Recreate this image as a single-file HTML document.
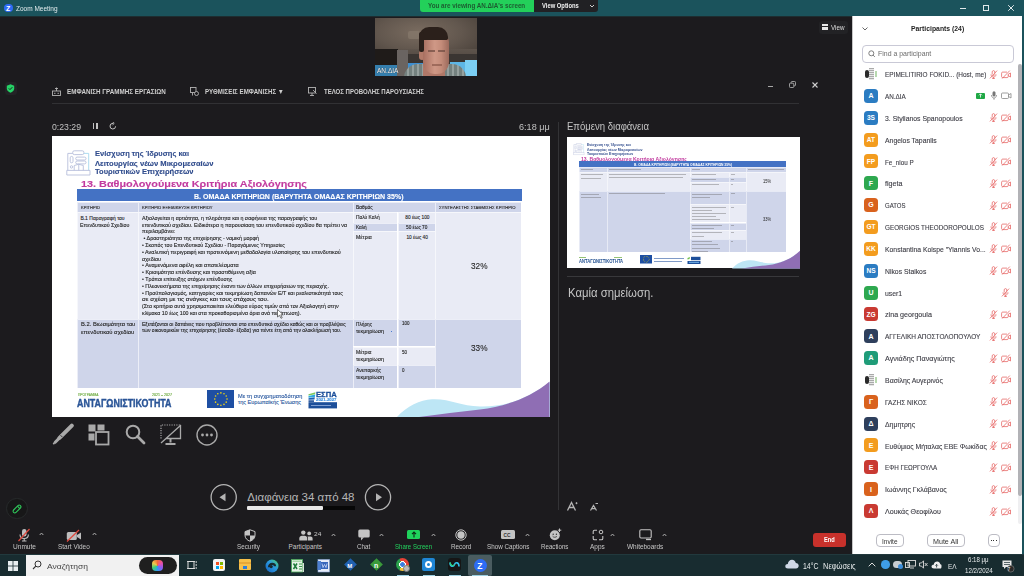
<!DOCTYPE html>
<html><head><meta charset="utf-8">
<style>
*{margin:0;padding:0;box-sizing:border-box}
html,body{width:1024px;height:576px;overflow:hidden;background:#1c1b1e;font-family:"Liberation Sans",sans-serif}
.a{position:absolute}
.t{position:absolute;white-space:nowrap;line-height:1;transform-origin:0 0}
.sl .t{-webkit-text-stroke:0.12px currentColor}
</style></head><body>
<div class="sl">
<div class="a" style="left:52.00px;top:136.00px;width:498.00px;height:280.50px;background:#ffffff"></div>
<svg class="a" style="left:65.50px;top:149.50px;" width="25" height="26" viewBox="0 0 25 26"><g fill="none" stroke-width="0.9" opacity="1.0"><rect x="6.7" y="0.8" width="11.2" height="3.8" rx="1.6" stroke="#b7bedb"/><path d="M6.7 3.4H1.8V20.4" stroke="#b7bedb"/><path d="M17.9 3.4H22.7V20.4" stroke="#a6d8ee"/><path d="M0.8 20.4H24V25H0.8Z" stroke="#b7bedb"/><rect x="4.2" y="6.4" width="2.8" height="6.4" rx="1.4" stroke="#b7bedb"/><circle cx="5.5" cy="16.9" r="1.2" stroke="#b7bedb"/><rect x="9.7" y="7.1" width="10.3" height="2.9" rx="1.4" stroke="#b7bedb"/><rect x="9.7" y="11" width="10.3" height="2.9" rx="1.4" stroke="#b7bedb"/><path d="M8.2 20.4V15.5Q12.75 13 17.3 15.5V20.4M12.75 14.3V20.4" stroke="#b7bedb"/></g></svg>
<div class="t" id="t1" style="left:95.00px;top:150.22px;font-size:8.10px;color:#2f4b8c;font-weight:bold;transform:scaleX(0.9245)">Ενίσχυση της Ίδρυσης και</div>
<div class="t" id="t2" style="left:95.00px;top:159.52px;font-size:8.10px;color:#2f4b8c;font-weight:bold;transform:scaleX(0.9411)">Λειτουργίας νέων Μικρομεσαίων</div>
<div class="t" id="t3" style="left:95.00px;top:168.31px;font-size:8.10px;color:#2f4b8c;font-weight:bold;transform:scaleX(0.9314)">Τουριστικών Επιχειρήσεων</div>
<div class="t" id="t4" style="left:81.00px;top:179.02px;font-size:9.80px;color:#c23b9f;font-weight:bold;transform:scaleX(1.1076)">13. Βαθμολογούμενα Κριτήρια Αξιολόγησης</div>
<div class="a" style="left:77.00px;top:189.00px;width:444.50px;height:12.40px;background:#4472c4"></div>
<div class="t" id="t5" style="left:194.40px;top:192.91px;font-size:8.10px;color:#fff;font-weight:bold;transform:scaleX(0.8688)">Β. ΟΜΑΔΑ ΚΡΙΤΗΡΙΩΝ (ΒΑΡΥΤΗΤΑ ΟΜΑΔΑΣ ΚΡΙΤΗΡΙΩΝ 35%)</div>
<div class="a" style="left:77.00px;top:202.20px;width:61.30px;height:10.10px;background:#cfd5ea;border-left:1px solid rgba(255,255,255,.6);border-top:1px solid rgba(255,255,255,.6)"></div>
<div class="a" style="left:138.30px;top:202.20px;width:214.30px;height:10.10px;background:#cfd5ea;border-left:1px solid rgba(255,255,255,.6);border-top:1px solid rgba(255,255,255,.6)"></div>
<div class="a" style="left:352.60px;top:202.20px;width:82.60px;height:10.10px;background:#cfd5ea;border-left:1px solid rgba(255,255,255,.6);border-top:1px solid rgba(255,255,255,.6)"></div>
<div class="a" style="left:435.20px;top:202.20px;width:86.30px;height:10.10px;background:#cfd5ea;border-left:1px solid rgba(255,255,255,.6);border-top:1px solid rgba(255,255,255,.6)"></div>
<div class="a" style="left:77.00px;top:212.30px;width:61.30px;height:106.50px;background:#e9ebf5;border-left:1px solid rgba(255,255,255,.6);border-top:1px solid rgba(255,255,255,.6)"></div>
<div class="a" style="left:138.30px;top:212.30px;width:214.30px;height:106.50px;background:#e9ebf5;border-left:1px solid rgba(255,255,255,.6);border-top:1px solid rgba(255,255,255,.6)"></div>
<div class="a" style="left:435.20px;top:212.30px;width:86.30px;height:106.50px;background:#e9ebf5;border-left:1px solid rgba(255,255,255,.6);border-top:1px solid rgba(255,255,255,.6)"></div>
<div class="a" style="left:352.60px;top:212.30px;width:44.90px;height:10.60px;background:#e9ebf5;border-left:1px solid rgba(255,255,255,.6);border-top:1px solid rgba(255,255,255,.6)"></div>
<div class="a" style="left:397.50px;top:212.30px;width:37.70px;height:10.60px;background:#e9ebf5;border-left:1px solid rgba(255,255,255,.6);border-top:1px solid rgba(255,255,255,.6)"></div>
<div class="a" style="left:352.60px;top:222.90px;width:44.90px;height:8.40px;background:#cfd5ea;border-left:1px solid rgba(255,255,255,.6);border-top:1px solid rgba(255,255,255,.6)"></div>
<div class="a" style="left:397.50px;top:222.90px;width:37.70px;height:8.40px;background:#cfd5ea;border-left:1px solid rgba(255,255,255,.6);border-top:1px solid rgba(255,255,255,.6)"></div>
<div class="a" style="left:352.60px;top:231.30px;width:44.90px;height:87.50px;background:#e9ebf5;border-left:1px solid rgba(255,255,255,.6);border-top:1px solid rgba(255,255,255,.6)"></div>
<div class="a" style="left:397.50px;top:231.30px;width:37.70px;height:87.50px;background:#e9ebf5;border-left:1px solid rgba(255,255,255,.6);border-top:1px solid rgba(255,255,255,.6)"></div>
<div class="a" style="left:77.00px;top:318.80px;width:61.30px;height:69.20px;background:#cfd5ea;border-left:1px solid rgba(255,255,255,.6);border-top:1px solid rgba(255,255,255,.6)"></div>
<div class="a" style="left:138.30px;top:318.80px;width:214.30px;height:69.20px;background:#cfd5ea;border-left:1px solid rgba(255,255,255,.6);border-top:1px solid rgba(255,255,255,.6)"></div>
<div class="a" style="left:435.20px;top:318.80px;width:86.30px;height:69.20px;background:#cfd5ea;border-left:1px solid rgba(255,255,255,.6);border-top:1px solid rgba(255,255,255,.6)"></div>
<div class="a" style="left:352.60px;top:318.80px;width:44.90px;height:27.70px;background:#cfd5ea;border-left:1px solid rgba(255,255,255,.6);border-top:1px solid rgba(255,255,255,.6)"></div>
<div class="a" style="left:397.50px;top:318.80px;width:37.70px;height:27.70px;background:#cfd5ea;border-left:1px solid rgba(255,255,255,.6);border-top:1px solid rgba(255,255,255,.6)"></div>
<div class="a" style="left:352.60px;top:346.50px;width:44.90px;height:18.00px;background:#e9ebf5;border-left:1px solid rgba(255,255,255,.6);border-top:1px solid rgba(255,255,255,.6)"></div>
<div class="a" style="left:397.50px;top:346.50px;width:37.70px;height:18.00px;background:#e9ebf5;border-left:1px solid rgba(255,255,255,.6);border-top:1px solid rgba(255,255,255,.6)"></div>
<div class="a" style="left:352.60px;top:364.50px;width:44.90px;height:23.50px;background:#cfd5ea;border-left:1px solid rgba(255,255,255,.6);border-top:1px solid rgba(255,255,255,.6)"></div>
<div class="a" style="left:397.50px;top:364.50px;width:37.70px;height:23.50px;background:#cfd5ea;border-left:1px solid rgba(255,255,255,.6);border-top:1px solid rgba(255,255,255,.6)"></div>
<div class="t" id="t6" style="left:81.00px;top:206.40px;font-size:4.40px;color:#262626;transform:scaleX(0.9268)">ΚΡΙΤΗΡΙΟ</div>
<div class="t" id="t7" style="left:142.00px;top:206.40px;font-size:4.40px;color:#262626;transform:scaleX(0.9417)">ΚΡΙΤΗΡΙΟ ΕΞΕΙΔΙΚΕΥΣΗ ΚΡΙΤΗΡΙΟΥ</div>
<div class="t" id="t8" style="left:356.30px;top:206.41px;font-size:4.60px;color:#262626;transform:scaleX(1.0635)">Βαθμός</div>
<div class="t" id="t9" style="left:439.30px;top:206.40px;font-size:4.40px;color:#262626;transform:scaleX(0.9660)">ΣΥΝΤΕΛΕΣΤΗΣ ΣΤΑΘΜΙΣΗΣ ΚΡΙΤΗΡΙΟ</div>
<div class="t" id="t10" style="left:80.40px;top:216.00px;font-size:5.00px;color:#262626">Β.1 Παραγραφή του</div>
<div class="t" id="t11" style="left:80.40px;top:222.61px;font-size:5.00px;color:#262626;transform:scaleX(1.0528)">Επενδυτικού Σχεδίου</div>
<div class="t" id="t12" style="left:142.30px;top:215.81px;font-size:5.00px;color:#262626;transform:scaleX(1.0598)">Αξιολογείται η αρτιότητα, η πληρότητα και η σαφήνεια της παραγραφής του</div>
<div class="t" id="t13" style="left:142.30px;top:222.61px;font-size:5.00px;color:#262626;transform:scaleX(1.0710)">επενδυτικού σχεδίου. Ειδικότερα η παρουσίαση του επενδυτικού σχεδίου θα πρέπει να</div>
<div class="t" id="t14" style="left:142.30px;top:229.41px;font-size:5.00px;color:#262626;transform:scaleX(1.0802)">περιλαμβάνει:</div>
<div class="t" id="t15" style="left:142.30px;top:236.20px;font-size:5.00px;color:#262626;transform:scaleX(1.0752)">&nbsp;• Δραστηριότητα της επιχείρησης - νομική μορφή</div>
<div class="t" id="t16" style="left:142.30px;top:243.00px;font-size:5.00px;color:#262626;transform:scaleX(1.0506)">• Σκοπός του Επενδυτικού Σχεδίου - Παραγόμενες Υπηρεσίες</div>
<div class="t" id="t17" style="left:142.30px;top:249.81px;font-size:5.00px;color:#262626;transform:scaleX(1.0830)">• Αναλυτική περιγραφή και προτεινόμενη μεθοδολογία υλοποίησης του επενδυτικού</div>
<div class="t" id="t18" style="left:142.30px;top:256.61px;font-size:5.00px;color:#262626;transform:scaleX(1.0887)">σχεδίου</div>
<div class="t" id="t19" style="left:142.30px;top:263.41px;font-size:5.00px;color:#262626;transform:scaleX(1.0975)">• Αναμενόμενα οφέλη και αποτελέσματα</div>
<div class="t" id="t20" style="left:142.30px;top:270.20px;font-size:5.00px;color:#262626;transform:scaleX(1.0771)">• Κρισιμότητα επένδυσης και προστιθέμενη αξία</div>
<div class="t" id="t21" style="left:142.30px;top:277.00px;font-size:5.00px;color:#262626;transform:scaleX(1.0604)">• Τρόποι επίτευξης στόχων επένδυσης</div>
<div class="t" id="t22" style="left:142.30px;top:283.81px;font-size:5.00px;color:#262626;transform:scaleX(1.0605)">• Πλεονεκτήματα της επιχείρησης έναντι των άλλων επιχειρήσεων της περιοχής.</div>
<div class="t" id="t23" style="left:142.30px;top:290.61px;font-size:5.00px;color:#262626;transform:scaleX(1.0720)">• Προϋπολογισμός, κατηγορίες και τεκμηρίωση δαπανών Ε/Τ και ρεαλιστικότητά τους</div>
<div class="t" id="t24" style="left:142.30px;top:297.41px;font-size:5.00px;color:#262626;transform:scaleX(1.2425)">σε σχέση με τις ανάγκες και τους στόχους του.</div>
<div class="t" id="t25" style="left:142.30px;top:304.20px;font-size:5.00px;color:#262626;transform:scaleX(1.0757)">(Στο κριτήριο αυτό χρησιμοποιείται ελεύθερα εύρος τιμών από τον Αξιολογητή στην</div>
<div class="t" id="t26" style="left:142.30px;top:311.00px;font-size:5.00px;color:#262626;transform:scaleX(1.0620)">κλίμακα 10 έως 100 και στα προκαθορισμένα όρια ανά περίπτωση).</div>
<div class="t" id="t27" style="left:356.30px;top:216.21px;font-size:4.80px;color:#262626;transform:scaleX(1.0144)">Πολύ Καλή</div>
<div class="t" id="t28" style="left:405.30px;top:216.21px;font-size:4.80px;color:#262626">80 έως 100</div>
<div class="t" id="t29" style="left:356.30px;top:226.00px;font-size:4.80px;color:#262626;transform:scaleX(0.9741)">Καλή</div>
<div class="t" id="t30" style="left:406.40px;top:226.00px;font-size:4.80px;color:#262626;transform:scaleX(0.9932)">50 έως 70</div>
<div class="t" id="t31" style="left:356.30px;top:235.71px;font-size:4.80px;color:#262626;transform:scaleX(1.0747)">Μέτρια</div>
<div class="t" id="t32" style="left:406.40px;top:235.71px;font-size:4.80px;color:#262626">10 έως 40</div>
<div class="t" id="t33" style="left:470.60px;top:262.20px;font-size:9.00px;color:#2a2a2a;transform:scaleX(0.9159)">32%</div>
<div class="t" id="t34" style="left:80.70px;top:322.21px;font-size:5.30px;color:#262626;transform:scaleX(1.0956)">Β.2. Βιωσιμότητα του</div>
<div class="t" id="t35" style="left:80.70px;top:330.10px;font-size:5.30px;color:#262626;transform:scaleX(1.1007)">επενδυτικού σχεδίου</div>
<div class="t" id="t36" style="left:142.30px;top:322.81px;font-size:4.70px;color:#262626;transform:scaleX(1.0788)">Εξετάζονται οι δαπάνες που προβλέπονται στο επενδυτικό σχέδιο καθώς και οι προβλέψεις</div>
<div class="t" id="t37" style="left:142.30px;top:329.42px;font-size:4.70px;color:#262626;transform:scaleX(1.0795)">των οικονομικών της επιχείρησης (έσοδα- έξοδα) για πέντε έτη από την ολοκλήρωσή του.</div>
<div class="t" id="t38" style="left:356.30px;top:321.81px;font-size:5.00px;color:#262626;transform:scaleX(0.9446)">Πλήρης</div>
<div class="t" id="t39" style="left:356.30px;top:328.81px;font-size:5.00px;color:#262626;transform:scaleX(1.0731)">τεκμηρίωση</div>
<div class="t" id="t40" style="left:402.00px;top:321.80px;font-size:4.60px;color:#262626;transform:scaleX(0.9776)">100</div>
<div class="t" id="t41" style="left:356.30px;top:350.41px;font-size:5.00px;color:#262626;transform:scaleX(1.0185)">Μέτρια</div>
<div class="t" id="t42" style="left:356.30px;top:357.41px;font-size:5.00px;color:#262626;transform:scaleX(1.0731)">τεκμηρίωση</div>
<div class="t" id="t43" style="left:402.00px;top:350.80px;font-size:4.60px;color:#262626;transform:scaleX(0.9756)">50</div>
<div class="t" id="t44" style="left:356.30px;top:368.00px;font-size:5.00px;color:#262626;transform:scaleX(1.0088)">Ανεπαρκής</div>
<div class="t" id="t45" style="left:356.30px;top:375.00px;font-size:5.00px;color:#262626;transform:scaleX(1.0731)">τεκμηρίωση</div>
<div class="t" id="t46" style="left:402.00px;top:368.50px;font-size:4.60px;color:#262626;transform:scaleX(0.9756)">0</div>
<div class="a" style="left:391.00px;top:331.00px;width:1.00px;height:1.00px;background:#4a7bd0"></div>
<div class="t" id="t47" style="left:470.60px;top:344.31px;font-size:9.00px;color:#2a2a2a;transform:scaleX(0.9159)">33%</div>
<div class="t" id="t48" style="left:78.00px;top:394.02px;font-size:3.80px;color:#6aa93c;transform:scaleX(0.8553)">ΠΡΟΓΡΑΜΜΑ</div>
<div class="t" id="t49" style="left:151.60px;top:394.02px;font-size:3.80px;color:#6aa93c;transform:scaleX(0.9467)">2021 – 2027</div>
<div class="t" id="t50" style="left:77.00px;top:398.60px;font-size:10.40px;color:#2a5597;font-weight:bold;transform:scaleX(0.8547);-webkit-text-stroke:0.4px #2a5597">ΑΝΤΑΓΩΝΙΣΤΙΚΟΤΗΤΑ</div>
<svg class="a" style="left:206.70px;top:390.30px;" width="27.8" height="18.1" viewBox="0 0 27.8 18.1"><rect width="27.8" height="18.1" fill="#1e4fa3"/><circle cx="20.05" cy="9.05" r="0.81" fill="#f2d50f"/><circle cx="19.23" cy="12.13" r="0.81" fill="#f2d50f"/><circle cx="16.98" cy="14.38" r="0.81" fill="#f2d50f"/><circle cx="13.90" cy="15.20" r="0.81" fill="#f2d50f"/><circle cx="10.82" cy="14.38" r="0.81" fill="#f2d50f"/><circle cx="8.57" cy="12.13" r="0.81" fill="#f2d50f"/><circle cx="7.75" cy="9.05" r="0.81" fill="#f2d50f"/><circle cx="8.57" cy="5.97" r="0.81" fill="#f2d50f"/><circle cx="10.82" cy="3.72" r="0.81" fill="#f2d50f"/><circle cx="13.90" cy="2.90" r="0.81" fill="#f2d50f"/><circle cx="16.98" cy="3.72" r="0.81" fill="#f2d50f"/><circle cx="19.23" cy="5.97" r="0.81" fill="#f2d50f"/></svg>
<div class="t" id="t51" style="left:238.00px;top:393.60px;font-size:5.60px;color:#2c5aa0;transform:scaleX(1.0100)">Με τη συγχρηματοδότηση</div>
<div class="t" id="t52" style="left:238.00px;top:400.40px;font-size:5.60px;color:#2c5aa0">της Ευρωπαϊκής Ένωσης</div>
<svg class="a" style="left:308.40px;top:390.50px;" width="30" height="18" viewBox="0 0 30 18"><path d="M0.5 3.2L7.5 1.2L7 3.3L0.5 4.6Z" fill="#7cc75a"/><path d="M0.5 5L7.3 3.6L6.8 6L0.5 6.8Z" fill="#2ca8e0"/><path d="M0.5 7.2L6.8 6.3L6.5 8.4L0.5 8.8Z" fill="#1d5fb0"/><rect x="0.5" y="9.3" width="5.5" height="1.6" fill="#1d4f9a"/><rect x="0.5" y="11.2" width="28.5" height="6.2" fill="#1d4f9a"/><rect x="3" y="14.2" width="20" height="0.8" fill="#cfe0ff" opacity=".7"/></svg>
<div class="t" id="t53" style="left:316.00px;top:391.20px;font-size:7.80px;color:#1d4f9a;font-weight:bold;transform:scaleX(0.9784);-webkit-text-stroke:0.3px #1d4f9a">ΕΣΠΑ</div>
<div class="t" id="t54" style="left:316.00px;top:398.31px;font-size:4.00px;color:#3a8ee0;font-weight:bold;transform:scaleX(1.0710)">2021-2027</div>
<svg class="a" style="left:395.00px;top:378.00px;" width="155" height="39" viewBox="0 0 155 39"><path d="M2 39C12 28 25 22 37 21.3C55 20.5 65 28 85 28.5C110 29 130 22 155 4V39Z" fill="#bde6f5"/><path d="M24 39C45 36 65 34 85 31.5C110 28.5 135 20 154.5 3.5V39Z" fill="#8f6eb4"/></svg>
<svg class="a" style="left:277.00px;top:309.00px;" width="7" height="10" viewBox="0 0 7 10"><path d="M0.5 0.5V8L2.5 6.3L4 9.3L5.2 8.7L3.8 5.8H6.3Z" fill="#fff" stroke="#222" stroke-width="0.6"/></svg>
</div>
<div class="a" style="left:567.00px;top:137.00px;width:233.00px;height:131.00px;background:#ffffff"></div>
<svg class="a" style="left:573.30px;top:142.70px;transform:scale(0.47);transform-origin:0 0" width="25" height="26" viewBox="0 0 25 26"><g fill="none" stroke-width="0.9" opacity="1.0"><rect x="6.7" y="0.8" width="11.2" height="3.8" rx="1.6" stroke="#b7bedb"/><path d="M6.7 3.4H1.8V20.4" stroke="#b7bedb"/><path d="M17.9 3.4H22.7V20.4" stroke="#a6d8ee"/><path d="M0.8 20.4H24V25H0.8Z" stroke="#b7bedb"/><rect x="4.2" y="6.4" width="2.8" height="6.4" rx="1.4" stroke="#b7bedb"/><circle cx="5.5" cy="16.9" r="1.2" stroke="#b7bedb"/><rect x="9.7" y="7.1" width="10.3" height="2.9" rx="1.4" stroke="#b7bedb"/><rect x="9.7" y="11" width="10.3" height="2.9" rx="1.4" stroke="#b7bedb"/><path d="M8.2 20.4V15.5Q12.75 13 17.3 15.5V20.4M12.75 14.3V20.4" stroke="#b7bedb"/></g></svg>
<div class="t" id="t55" style="left:587.30px;top:143.30px;font-size:3.90px;color:#2f4b8c;font-weight:bold;transform:scaleX(0.8941)">Ενίσχυση της Ίδρυσης και</div>
<div class="t" id="t56" style="left:587.30px;top:147.51px;font-size:3.90px;color:#2f4b8c;font-weight:bold;transform:scaleX(0.9176)">Λειτουργίας νέων Μικρομεσαίων</div>
<div class="t" id="t57" style="left:587.30px;top:151.71px;font-size:3.90px;color:#2f4b8c;font-weight:bold;transform:scaleX(0.9087)">Τουριστικών Επιχειρήσεων</div>
<div class="t" id="t58" style="left:580.80px;top:157.61px;font-size:4.80px;color:#c23b9f;font-weight:bold;transform:scaleX(1.0608)">13. Βαθμολογούμενα Κριτήρια Αξιολόγησης</div>
<div class="a" style="left:578.80px;top:161.20px;width:207.30px;height:5.60px;background:#4472c4"></div>
<div class="t" id="t59" style="left:633.50px;top:163.61px;font-size:3.80px;color:#fff;font-weight:bold;transform:scaleX(0.8664)">Β. ΟΜΑΔΑ ΚΡΙΤΗΡΙΩΝ (ΒΑΡΥΤΗΤΑ ΟΜΑΔΑΣ ΚΡΙΤΗΡΙΩΝ 35%)</div>
<div class="a" style="left:578.80px;top:167.00px;width:28.50px;height:4.90px;background:#cfd5ea;border-left:0.5px solid rgba(255,255,255,.5);border-top:0.5px solid rgba(255,255,255,.5)"></div>
<div class="a" style="left:607.30px;top:167.00px;width:83.00px;height:4.90px;background:#cfd5ea;border-left:0.5px solid rgba(255,255,255,.5);border-top:0.5px solid rgba(255,255,255,.5)"></div>
<div class="a" style="left:690.30px;top:167.00px;width:56.00px;height:4.90px;background:#cfd5ea;border-left:0.5px solid rgba(255,255,255,.5);border-top:0.5px solid rgba(255,255,255,.5)"></div>
<div class="a" style="left:746.30px;top:167.00px;width:39.80px;height:4.90px;background:#cfd5ea;border-left:0.5px solid rgba(255,255,255,.5);border-top:0.5px solid rgba(255,255,255,.5)"></div>
<div class="a" style="left:578.80px;top:171.90px;width:28.50px;height:19.40px;background:#e9ebf5;border-left:0.5px solid rgba(255,255,255,.5);border-top:0.5px solid rgba(255,255,255,.5)"></div>
<div class="a" style="left:607.30px;top:171.90px;width:83.00px;height:19.40px;background:#e9ebf5;border-left:0.5px solid rgba(255,255,255,.5);border-top:0.5px solid rgba(255,255,255,.5)"></div>
<div class="a" style="left:746.30px;top:171.90px;width:39.80px;height:19.40px;background:#e9ebf5;border-left:0.5px solid rgba(255,255,255,.5);border-top:0.5px solid rgba(255,255,255,.5)"></div>
<div class="a" style="left:690.30px;top:171.90px;width:38.30px;height:5.40px;background:#e9ebf5;border-left:0.5px solid rgba(255,255,255,.5);border-top:0.5px solid rgba(255,255,255,.5)"></div>
<div class="a" style="left:728.60px;top:171.90px;width:17.70px;height:5.40px;background:#e9ebf5;border-left:0.5px solid rgba(255,255,255,.5);border-top:0.5px solid rgba(255,255,255,.5)"></div>
<div class="a" style="left:690.30px;top:177.30px;width:38.30px;height:4.30px;background:#cfd5ea;border-left:0.5px solid rgba(255,255,255,.5);border-top:0.5px solid rgba(255,255,255,.5)"></div>
<div class="a" style="left:728.60px;top:177.30px;width:17.70px;height:4.30px;background:#cfd5ea;border-left:0.5px solid rgba(255,255,255,.5);border-top:0.5px solid rgba(255,255,255,.5)"></div>
<div class="a" style="left:690.30px;top:181.60px;width:38.30px;height:9.70px;background:#e9ebf5;border-left:0.5px solid rgba(255,255,255,.5);border-top:0.5px solid rgba(255,255,255,.5)"></div>
<div class="a" style="left:728.60px;top:181.60px;width:17.70px;height:9.70px;background:#e9ebf5;border-left:0.5px solid rgba(255,255,255,.5);border-top:0.5px solid rgba(255,255,255,.5)"></div>
<div class="a" style="left:578.80px;top:191.30px;width:28.50px;height:61.10px;background:#cfd5ea;border-left:0.5px solid rgba(255,255,255,.5);border-top:0.5px solid rgba(255,255,255,.5)"></div>
<div class="a" style="left:607.30px;top:191.30px;width:83.00px;height:61.10px;background:#cfd5ea;border-left:0.5px solid rgba(255,255,255,.5);border-top:0.5px solid rgba(255,255,255,.5)"></div>
<div class="a" style="left:746.30px;top:191.30px;width:39.80px;height:61.10px;background:#cfd5ea;border-left:0.5px solid rgba(255,255,255,.5);border-top:0.5px solid rgba(255,255,255,.5)"></div>
<div class="a" style="left:690.30px;top:191.30px;width:38.30px;height:13.00px;background:#cfd5ea;border-left:0.5px solid rgba(255,255,255,.5);border-top:0.5px solid rgba(255,255,255,.5)"></div>
<div class="a" style="left:728.60px;top:191.30px;width:17.70px;height:13.00px;background:#cfd5ea;border-left:0.5px solid rgba(255,255,255,.5);border-top:0.5px solid rgba(255,255,255,.5)"></div>
<div class="a" style="left:690.30px;top:204.30px;width:38.30px;height:18.20px;background:#e9ebf5;border-left:0.5px solid rgba(255,255,255,.5);border-top:0.5px solid rgba(255,255,255,.5)"></div>
<div class="a" style="left:728.60px;top:204.30px;width:17.70px;height:18.20px;background:#e9ebf5;border-left:0.5px solid rgba(255,255,255,.5);border-top:0.5px solid rgba(255,255,255,.5)"></div>
<div class="a" style="left:690.30px;top:222.50px;width:38.30px;height:7.30px;background:#cfd5ea;border-left:0.5px solid rgba(255,255,255,.5);border-top:0.5px solid rgba(255,255,255,.5)"></div>
<div class="a" style="left:728.60px;top:222.50px;width:17.70px;height:7.30px;background:#cfd5ea;border-left:0.5px solid rgba(255,255,255,.5);border-top:0.5px solid rgba(255,255,255,.5)"></div>
<div class="a" style="left:690.30px;top:229.80px;width:38.30px;height:9.10px;background:#e9ebf5;border-left:0.5px solid rgba(255,255,255,.5);border-top:0.5px solid rgba(255,255,255,.5)"></div>
<div class="a" style="left:728.60px;top:229.80px;width:17.70px;height:9.10px;background:#e9ebf5;border-left:0.5px solid rgba(255,255,255,.5);border-top:0.5px solid rgba(255,255,255,.5)"></div>
<div class="a" style="left:690.30px;top:238.90px;width:38.30px;height:13.50px;background:#cfd5ea;border-left:0.5px solid rgba(255,255,255,.5);border-top:0.5px solid rgba(255,255,255,.5)"></div>
<div class="a" style="left:728.60px;top:238.90px;width:17.70px;height:13.50px;background:#cfd5ea;border-left:0.5px solid rgba(255,255,255,.5);border-top:0.5px solid rgba(255,255,255,.5)"></div>
<div class="a" style="left:580.50px;top:169.00px;width:12.00px;height:0.90px;background:#6a6a6a;opacity:.42"></div>
<div class="a" style="left:609.00px;top:169.00px;width:32.00px;height:0.90px;background:#6a6a6a;opacity:.42"></div>
<div class="a" style="left:692.00px;top:169.00px;width:8.00px;height:0.90px;background:#6a6a6a;opacity:.42"></div>
<div class="a" style="left:748.00px;top:169.00px;width:36.00px;height:0.90px;background:#6a6a6a;opacity:.42"></div>
<div class="a" style="left:580.50px;top:174.20px;width:22.00px;height:0.90px;background:#6a6a6a;opacity:.42"></div>
<div class="a" style="left:580.50px;top:177.50px;width:20.00px;height:0.90px;background:#6a6a6a;opacity:.42"></div>
<div class="a" style="left:609.00px;top:174.00px;width:77.00px;height:0.90px;background:#6a6a6a;opacity:.42"></div>
<div class="a" style="left:609.00px;top:177.30px;width:74.00px;height:0.90px;background:#6a6a6a;opacity:.42"></div>
<div class="a" style="left:692.00px;top:174.30px;width:24.00px;height:0.90px;background:#6a6a6a;opacity:.42"></div>
<div class="a" style="left:731.00px;top:173.80px;width:4.00px;height:0.90px;background:#6a6a6a;opacity:.42"></div>
<div class="a" style="left:692.00px;top:179.00px;width:24.00px;height:0.90px;background:#6a6a6a;opacity:.42"></div>
<div class="a" style="left:731.00px;top:178.60px;width:3.00px;height:0.90px;background:#6a6a6a;opacity:.42"></div>
<div class="a" style="left:692.00px;top:184.00px;width:27.00px;height:0.90px;background:#6a6a6a;opacity:.42"></div>
<div class="a" style="left:731.00px;top:183.60px;width:1.50px;height:0.90px;background:#6a6a6a;opacity:.42"></div>
<div class="t" id="t60" style="left:762.70px;top:179.41px;font-size:5.00px;color:#222;transform:scaleX(0.7888)">15%</div>
<div class="a" style="left:580.50px;top:193.50px;width:18.00px;height:0.90px;background:#6a6a6a;opacity:.42"></div>
<div class="a" style="left:580.50px;top:196.80px;width:20.00px;height:0.90px;background:#6a6a6a;opacity:.42"></div>
<div class="a" style="left:609.00px;top:193.40px;width:56.00px;height:0.90px;background:#6a6a6a;opacity:.42"></div>
<div class="a" style="left:692.00px;top:193.80px;width:30.00px;height:0.90px;background:#6a6a6a;opacity:.42"></div>
<div class="a" style="left:692.00px;top:197.00px;width:18.00px;height:0.90px;background:#6a6a6a;opacity:.42"></div>
<div class="a" style="left:731.00px;top:193.20px;width:3.50px;height:0.90px;background:#6a6a6a;opacity:.42"></div>
<div class="a" style="left:692.00px;top:207.00px;width:34.00px;height:0.90px;background:#6a6a6a;opacity:.42"></div>
<div class="a" style="left:692.00px;top:210.10px;width:20.00px;height:0.90px;background:#6a6a6a;opacity:.42"></div>
<div class="a" style="left:692.00px;top:213.20px;width:34.00px;height:0.90px;background:#6a6a6a;opacity:.42"></div>
<div class="a" style="left:692.00px;top:216.30px;width:24.00px;height:0.90px;background:#6a6a6a;opacity:.42"></div>
<div class="a" style="left:692.00px;top:219.40px;width:28.00px;height:0.90px;background:#6a6a6a;opacity:.42"></div>
<div class="a" style="left:731.00px;top:206.60px;width:3.00px;height:0.90px;background:#6a6a6a;opacity:.42"></div>
<div class="a" style="left:692.00px;top:224.60px;width:30.00px;height:0.90px;background:#6a6a6a;opacity:.42"></div>
<div class="a" style="left:692.00px;top:227.70px;width:22.00px;height:0.90px;background:#6a6a6a;opacity:.42"></div>
<div class="a" style="left:731.00px;top:224.50px;width:2.50px;height:0.90px;background:#6a6a6a;opacity:.42"></div>
<div class="a" style="left:692.00px;top:232.20px;width:30.00px;height:0.90px;background:#6a6a6a;opacity:.42"></div>
<div class="a" style="left:692.00px;top:235.50px;width:12.00px;height:0.90px;background:#6a6a6a;opacity:.42"></div>
<div class="a" style="left:731.00px;top:231.90px;width:2.50px;height:0.90px;background:#6a6a6a;opacity:.42"></div>
<div class="a" style="left:692.00px;top:241.20px;width:20.00px;height:0.90px;background:#6a6a6a;opacity:.42"></div>
<div class="a" style="left:692.00px;top:244.40px;width:26.00px;height:0.90px;background:#6a6a6a;opacity:.42"></div>
<div class="a" style="left:692.00px;top:247.60px;width:28.00px;height:0.90px;background:#6a6a6a;opacity:.42"></div>
<div class="a" style="left:692.00px;top:250.80px;width:16.00px;height:0.90px;background:#6a6a6a;opacity:.42"></div>
<div class="a" style="left:731.00px;top:240.80px;width:1.50px;height:0.90px;background:#6a6a6a;opacity:.42"></div>
<div class="t" id="t61" style="left:762.70px;top:217.31px;font-size:5.00px;color:#222;transform:scaleX(0.7888)">33%</div>
<div class="a" style="left:578.80px;top:257.00px;width:7.00px;height:0.60px;background:#6aa93c;opacity:.7"></div>
<div class="a" style="left:614.00px;top:257.00px;width:8.00px;height:0.60px;background:#6aa93c;opacity:.7"></div>
<div class="t" id="t62" style="left:578.80px;top:258.61px;font-size:5.20px;color:#1f4d8e;font-weight:bold;transform:scaleX(0.7989)">ΑΝΤΑΓΩΝΙΣΤΙΚΟΤΗΤΑ</div>
<svg class="a" style="left:639.60px;top:255.30px;" width="12.6" height="8.5" viewBox="0 0 12.6 8.5"><rect width="12.6" height="8.5" fill="#1e4fa3"/><circle cx="9.19" cy="4.25" r="0.38" fill="#f2d50f"/><circle cx="8.80" cy="5.70" r="0.38" fill="#f2d50f"/><circle cx="7.75" cy="6.75" r="0.38" fill="#f2d50f"/><circle cx="6.30" cy="7.14" r="0.38" fill="#f2d50f"/><circle cx="4.86" cy="6.75" r="0.38" fill="#f2d50f"/><circle cx="3.80" cy="5.70" r="0.38" fill="#f2d50f"/><circle cx="3.41" cy="4.25" r="0.38" fill="#f2d50f"/><circle cx="3.80" cy="2.81" r="0.38" fill="#f2d50f"/><circle cx="4.85" cy="1.75" r="0.38" fill="#f2d50f"/><circle cx="6.30" cy="1.36" r="0.38" fill="#f2d50f"/><circle cx="7.75" cy="1.75" r="0.38" fill="#f2d50f"/><circle cx="8.80" cy="2.80" r="0.38" fill="#f2d50f"/></svg>
<div class="a" style="left:654.00px;top:257.50px;width:30.00px;height:1.00px;background:#4a70b0;opacity:.7"></div>
<div class="a" style="left:654.00px;top:260.50px;width:28.00px;height:1.00px;background:#4a70b0;opacity:.7"></div>
<svg class="a" style="left:687.00px;top:255.50px;" width="14" height="8.5" viewBox="0 0 14 8.5"><path d="M0.5 2L3 1L2.5 3L0.5 3.5Z" fill="#6fbf4a"/><rect x="0.5" y="5" width="13" height="3.2" fill="#1d4f9a"/><rect x="4" y="0.8" width="9.5" height="3.4" fill="#1d4f9a"/><rect x="2" y="5.8" width="10" height="1" fill="#8fd0ff" opacity=".8"/></svg>
<svg class="a" style="left:731.00px;top:249.00px;" width="69" height="19.5" viewBox="0 0 69 19.5"><path d="M1 19.5C6 14 12 11.5 18 11.2C26 10.8 30 14 39 14.3C50 14.5 58 11 69 2.5V19.5Z" fill="#bde6f5"/><path d="M11 19.5C20 18 29 17 38 16C50 14.5 60 10 69 1.8V19.5Z" fill="#8f6eb4"/></svg>
<div class="a" style="left:0.00px;top:0.00px;width:1024.00px;height:16.00px;background:#1b535c"></div>
<div class="a" style="left:0.00px;top:16.00px;width:852.00px;height:1.00px;background:#1d2d30"></div>
<div class="a" style="left:4.00px;top:3.50px;width:8.60px;height:8.60px;background:#2d6cf5;border-radius:50%"></div>
<div class="t" id="t63" style="left:5.90px;top:4.62px;font-size:7.00px;color:#fff;font-weight:bold">Z</div>
<div class="t" id="t64" style="left:16.00px;top:5.00px;font-size:7.20px;color:#e3ecee;transform:scaleX(0.9031)">Zoom Meeting</div>
<div class="a" style="left:960.00px;top:8.00px;width:6.00px;height:1.00px;background:#e0e8ea"></div>
<div class="a" style="left:983.00px;top:5.00px;width:6.00px;height:6.00px;background:transparent;border:1px solid #e0e8ea"></div>
<svg class="a" style="left:1007.00px;top:4.00px;" width="8" height="8" viewBox="0 0 8 8"><path d="M1.2 1.2L6.8 6.8M6.8 1.2L1.2 6.8" stroke="#e0e8ea" stroke-width="1"/></svg>
<div class="a" style="left:420.00px;top:0.00px;width:114.00px;height:11.70px;background:#23d05a;border-radius:0 0 0 3px"></div>
<div class="t" id="t65" style="left:428.30px;top:2.21px;font-size:7.00px;color:#1d5c31;font-weight:bold;transform:scaleX(0.8948)">You are viewing AN.ΔΙΑ's screen</div>
<div class="a" style="left:534.00px;top:0.00px;width:64.00px;height:11.70px;background:#212124;border-radius:0 0 3px 0"></div>
<div class="t" id="t66" style="left:542.20px;top:2.21px;font-size:7.00px;color:#f0f0f0;font-weight:bold;transform:scaleX(0.8322)">View Options</div>
<svg class="a" style="left:589.00px;top:4.00px;" width="6" height="4" viewBox="0 0 6 4"><path d="M1 1L3 3L5 1" stroke="#ccc" fill="none" stroke-width="1"/></svg>
<div class="a" style="left:375px;top:18px;width:102px;height:58px;overflow:hidden;background:#5a5048"><div class="a" style="left:0;top:0;width:102px;height:58px;filter:blur(0.45px)">
  <div class="a" style="left:0;top:0;width:102px;height:34px;background:radial-gradient(ellipse 70px 30px at 45px 14px,#7a6c60,#62574e 60%,#4d443d)"></div>
  <div class="a" style="left:0;top:31px;width:102px;height:16px;background:linear-gradient(180deg,#5e544c,#4a423c)"></div>
  <div class="a" style="left:33px;top:13px;width:12px;height:8px;background:#8a7d70;opacity:.6;border-radius:2px"></div>
  <div class="a" style="left:0;top:31px;width:23px;height:17px;background:#1f1b19"></div>
  <div class="a" style="left:22px;top:32px;width:11px;height:26px;background:#6a6461"></div>
  <div class="a" style="left:33px;top:36px;width:70px;height:10px;background:#3a3532"></div>
  <div class="a" style="left:0;top:47px;width:22px;height:11px;background:#357fae"></div>
  <div class="a" style="left:33px;top:45px;width:16px;height:13px;background:#3f8fd0"></div>
  <div class="a" style="left:75px;top:44px;width:15px;height:14px;background:#5db6e6"></div>
  <div class="a" style="left:90px;top:42px;width:12px;height:16px;background:#7bcff4"></div>
  <div class="a" style="left:29px;top:46px;width:62px;height:14px;background:repeating-linear-gradient(90deg,#74817f 0 3px,#95a09e 3px 5px);border-radius:14px 14px 0 0"></div>
  <div class="a" style="left:48px;top:42px;width:22px;height:16px;background:#b07868"></div>
  <div class="a" style="left:44px;top:32px;width:6px;height:10px;background:#b27a69;border-radius:3px"></div>
  <div class="a" style="left:48px;top:18px;width:26px;height:38px;background:linear-gradient(90deg,#a86f60,#cf9886 45%,#c48c7a 70%,#9c6a5c);border-radius:6px 6px 12px 12px"></div>
  <div class="a" style="left:44px;top:9px;width:29px;height:13px;background:#2b201b;border-radius:14px 14px 2px 4px"></div>
  <div class="a" style="left:44px;top:14px;width:5px;height:20px;background:#2b201b;border-radius:2px"></div>
  <div class="a" style="left:53px;top:32px;width:7px;height:2px;background:#6e4a40;opacity:.7"></div>
  <div class="a" style="left:63px;top:32px;width:7px;height:2px;background:#6e4a40;opacity:.7"></div>
  <div class="a" style="left:57px;top:46px;width:10px;height:2px;background:#8c5a4c;opacity:.7"></div>
</div></div>
<div class="t" id="t67" style="left:377.00px;top:67.70px;font-size:6.60px;color:#fff;transform:scaleX(0.9935);text-shadow:0 0 1px #000">AN.ΔΙΑ</div>
<div class="a" style="left:819.00px;top:21.00px;width:29.00px;height:13.00px;background:#222225;border-radius:3px"></div>
<div class="a" style="left:822.00px;top:24.00px;width:6.00px;height:6.00px;background:#e8e8e8"></div>
<div class="a" style="left:822.00px;top:26.00px;width:6.00px;height:0.80px;background:#242427"></div>
<div class="t" id="t68" style="left:831.00px;top:24.32px;font-size:7.00px;color:#dedede;transform:scaleX(0.8972)">View</div>
<div class="a" style="left:4.50px;top:82.00px;width:12.50px;height:12.50px;background:#232326;border-radius:3px"></div>
<svg class="a" style="left:6.30px;top:84.00px;" width="9" height="9" viewBox="0 0 9 9"><path d="M4.5 0.3L8.2 1.8V4.5C8.2 6.6 6.6 8 4.5 8.7C2.4 8 0.8 6.6 0.8 4.5V1.8Z" fill="#25d366"/><path d="M2.8 4.4L4 5.6L6.3 3.2" stroke="#1c1b1e" stroke-width="1" fill="none"/></svg>
<svg class="a" style="left:52.00px;top:87.00px;" width="9" height="9" viewBox="0 0 9 9"><rect x="0.5" y="4" width="8" height="4.5" fill="none" stroke="#b4b4b4" stroke-width="0.9"/><path d="M4.5 0.5V4M3 1.5H6M2 6.3H3.5M5.5 6.3H7" stroke="#b4b4b4" stroke-width="0.9"/></svg>
<div class="t" id="t69" style="left:67.30px;top:87.82px;font-size:7.00px;color:#cfcfcf;font-weight:bold;transform:scaleX(0.8971)">ΕΜΦΑΝΙΣΗ ΓΡΑΜΜΗΣ ΕΡΓΑΣΙΩΝ</div>
<svg class="a" style="left:189.60px;top:87.00px;" width="9" height="9" viewBox="0 0 9 9"><rect x="0.5" y="0.5" width="5.5" height="5" fill="none" stroke="#b4b4b4" stroke-width="0.9"/><circle cx="6.5" cy="6.5" r="2" fill="#1c1b1e" stroke="#b4b4b4" stroke-width="0.9"/><path d="M2.5 5.5V8.5" stroke="#b4b4b4" stroke-width="0.9"/></svg>
<div class="t" id="t70" style="left:205.20px;top:87.82px;font-size:7.00px;color:#cfcfcf;font-weight:bold;transform:scaleX(0.8796)">ΡΥΘΜΙΣΕΙΣ ΕΜΦΑΝΙΣΗΣ ▼</div>
<svg class="a" style="left:307.60px;top:87.00px;" width="9" height="9" viewBox="0 0 9 9"><rect x="0.5" y="0.5" width="7" height="5.5" fill="none" stroke="#b4b4b4" stroke-width="0.9"/><path d="M4 6V8.5M2 8.5H6M5 3L8.5 6.5" stroke="#b4b4b4" stroke-width="0.9"/></svg>
<div class="t" id="t71" style="left:324.00px;top:87.82px;font-size:7.00px;color:#cfcfcf;font-weight:bold;transform:scaleX(0.8640)">ΤΕΛΟΣ ΠΡΟΒΟΛΗΣ ΠΑΡΟΥΣΙΑΣΗΣ</div>
<div class="a" style="left:52.00px;top:103.00px;width:747.00px;height:1.00px;background:#313134"></div>
<div class="a" style="left:768.00px;top:86.00px;width:5.00px;height:1.00px;background:#a8a8a8"></div>
<svg class="a" style="left:789.00px;top:81.00px;" width="7" height="7" viewBox="0 0 7 7"><rect x="0.5" y="2.2" width="4.3" height="4.3" rx="0.8" fill="none" stroke="#a8a8a8" stroke-width="0.9"/><path d="M2.2 2.2V1.3C2.2 0.8 2.5 0.5 3 0.5H5.7C6.2 0.5 6.5 0.8 6.5 1.3V4C6.5 4.5 6.2 4.8 5.7 4.8H4.8" stroke="#a8a8a8" fill="none" stroke-width="0.9"/></svg>
<svg class="a" style="left:812.00px;top:82.00px;" width="6" height="6" viewBox="0 0 6 6"><path d="M0.5 0.5L5.5 5.5M5.5 0.5L0.5 5.5" stroke="#cfcfcf" stroke-width="1.1"/></svg>
<div class="t" id="t72" style="left:52.00px;top:122.51px;font-size:9.20px;color:#c2c2c2;transform:scaleX(0.9460)">0:23:29</div>
<div class="a" style="left:92.60px;top:122.70px;width:1.70px;height:6.00px;background:#c2c2c2"></div>
<div class="a" style="left:96.20px;top:122.70px;width:1.70px;height:6.00px;background:#c2c2c2"></div>
<svg class="a" style="left:109.00px;top:121.50px;" width="8" height="8" viewBox="0 0 8 8"><path d="M6.6 4.3A2.8 2.8 0 1 1 4 1.4" stroke="#c2c2c2" fill="none" stroke-width="1"/><path d="M3.6 0L5.2 1.4L3.6 2.9" stroke="#c2c2c2" fill="none" stroke-width="1"/></svg>
<div class="t" id="t73" style="left:519.20px;top:122.51px;font-size:9.20px;color:#c2c2c2;transform:scaleX(0.9925)">6:18 μμ</div>
<div class="a" style="left:558.00px;top:122.00px;width:1.00px;height:388.00px;background:#333336"></div>
<div class="t" id="t74" style="left:567.20px;top:121.52px;font-size:10.00px;color:#c4c4c4;transform:scaleX(0.9535)">Επόμενη διαφάνεια</div>
<div class="a" style="left:567.00px;top:276.00px;width:232.00px;height:1.00px;background:#38383b"></div>
<div class="t" id="t75" style="left:567.60px;top:286.91px;font-size:12.20px;color:#c4c4c4;transform:scaleX(0.9297)">Καμία σημείωση.</div>
<svg class="a" style="left:52.00px;top:423.00px;" width="22" height="22" viewBox="0 0 22 22"><path d="M19.8 2.6L7.5 14.9" stroke="#a9a9a9" stroke-width="4" stroke-linecap="round"/><path d="M8.6 12.3L10.2 13.9" stroke="#1c1b1e" stroke-width="0.9"/><path d="M6.8 15.6L3.2 19.2" stroke="#a9a9a9" stroke-width="3" stroke-linecap="round"/><circle cx="1.8" cy="20.6" r="1" fill="#a9a9a9"/></svg>
<svg class="a" style="left:88.00px;top:424.00px;" width="22" height="22" viewBox="0 0 22 22"><rect x="0.5" y="0.5" width="7" height="7" fill="#a9a9a9"/><rect x="9.5" y="0.5" width="7" height="6" fill="#a9a9a9"/><rect x="0.5" y="9.5" width="6" height="7" fill="#a9a9a9"/><rect x="8" y="8" width="12.5" height="12.5" fill="#1c1b1e" stroke="#a9a9a9" stroke-width="1.8"/></svg>
<svg class="a" style="left:125.00px;top:424.00px;" width="22" height="22" viewBox="0 0 22 22"><circle cx="8" cy="8" r="6.3" fill="none" stroke="#a9a9a9" stroke-width="2"/><path d="M12.5 12.5L19 19" stroke="#a9a9a9" stroke-width="2.8" stroke-linecap="round"/></svg>
<svg class="a" style="left:160.00px;top:424.00px;" width="22" height="22" viewBox="0 0 22 22"><path d="M1 14.5V1H20.5" fill="none" stroke="#a9a9a9" stroke-width="1.2" stroke-dasharray="1.2 1.2"/><path d="M1 19L21 1M20.5 1.5V14.5H6" fill="none" stroke="#a9a9a9" stroke-width="1.3"/><path d="M10.5 15V18.5M5.5 20H15.5" stroke="#a9a9a9" stroke-width="2"/></svg>
<svg class="a" style="left:196.00px;top:424.00px;" width="22" height="22" viewBox="0 0 22 22"><circle cx="11" cy="11" r="10" fill="none" stroke="#a9a9a9" stroke-width="1.4"/><circle cx="6.5" cy="11" r="1.4" fill="#a9a9a9"/><circle cx="11" cy="11" r="1.4" fill="#a9a9a9"/><circle cx="15.5" cy="11" r="1.4" fill="#a9a9a9"/></svg>
<svg class="a" style="left:210.00px;top:484.00px;" width="28" height="28" viewBox="0 0 28 28"><circle cx="13.7" cy="13.3" r="12.6" fill="none" stroke="#b4b4b4" stroke-width="1.3"/><path d="M9.5 13.3L15.5 9.3V17.3Z" fill="#b4b4b4"/></svg>
<div class="t" id="t76" style="left:247.30px;top:492.25px;font-size:11.50px;color:#b6b6b6">Διαφάνεια 34 από 48</div>
<div class="a" style="left:247.00px;top:506.00px;width:108.00px;height:3.50px;background:#070707"></div>
<div class="a" style="left:247.00px;top:506.00px;width:76.00px;height:3.50px;background:#e8e8e8;border-radius:1px"></div>
<svg class="a" style="left:364.00px;top:484.00px;" width="28" height="28" viewBox="0 0 28 28"><circle cx="14" cy="13.3" r="12.6" fill="none" stroke="#b4b4b4" stroke-width="1.3"/><path d="M18 13.3L12 9.3V17.3Z" fill="#b4b4b4"/></svg>
<svg class="a" style="left:566.00px;top:501.00px;" width="34" height="11" viewBox="0 0 34 11"><path d="M1.5 9.5L5.5 1.5L9.5 9.5M3.2 6.5H7.8" stroke="#b5b5b5" stroke-width="1.3" fill="none"/><path d="M9.5 2.2H11.5M10.5 1.2V3.2" stroke="#b5b5b5" stroke-width="0.9"/><path d="M24.5 9.5L27.5 4.5L30.5 9.5M25.7 7.6H29.3" stroke="#b5b5b5" stroke-width="1.2" fill="none"/><path d="M29.5 2.5H32" stroke="#b5b5b5" stroke-width="1"/></svg>
<div class="a" style="left:6.20px;top:498.00px;width:21.40px;height:21.40px;background:#171718;border-radius:50%;border:1px solid #272a2b"></div>
<svg class="a" style="left:11.00px;top:503.00px;" width="12" height="12" viewBox="0 0 12 12"><g transform="rotate(-45 6 6)"><rect x="1.2" y="4.3" width="9.6" height="3.4" rx="1.7" fill="none" stroke="#2fc85a" stroke-width="1.1"/><path d="M8.3 4.3V7.7" stroke="#2fc85a" stroke-width="1"/></g></svg>
<svg class="a" style="left:17.00px;top:528.00px;" width="14" height="14" viewBox="0 0 14 14"><rect x="5" y="1" width="4.5" height="7.5" rx="2.2" fill="#bdbdbd"/><path d="M3 6.5C3 9 4.8 10.5 7.2 10.5S11.4 9 11.4 6.5M7.2 10.5V13M5 13H9.5" stroke="#bdbdbd" fill="none" stroke-width="1.1"/><path d="M1.5 13L12.5 1" stroke="#e04a3f" stroke-width="1.2"/></svg>
<div class="t" id="t77" style="left:12.70px;top:544.22px;font-size:6.40px;color:#c7c7c7;transform:scaleX(1.0272)">Unmute</div>
<svg class="a" style="left:39.00px;top:532.00px;" width="5" height="4" viewBox="0 0 5 4"><path d="M0.7 3L2.5 1L4.3 3" stroke="#bbb" fill="none" stroke-width="0.9"/></svg>
<svg class="a" style="left:66.00px;top:529.00px;" width="16" height="13" viewBox="0 0 16 13"><rect x="0.8" y="3" width="10" height="8" rx="1.5" fill="#bdbdbd"/><path d="M11 6L15 3.5V10.5L11 8Z" fill="#bdbdbd"/><path d="M1 12.5L13 1" stroke="#e04a3f" stroke-width="1.2"/></svg>
<div class="t" id="t78" style="left:58.00px;top:544.22px;font-size:6.40px;color:#c7c7c7;transform:scaleX(1.0090)">Start Video</div>
<svg class="a" style="left:92.00px;top:532.00px;" width="5" height="4" viewBox="0 0 5 4"><path d="M0.7 3L2.5 1L4.3 3" stroke="#bbb" fill="none" stroke-width="0.9"/></svg>
<svg class="a" style="left:243.50px;top:528.50px;" width="12" height="13" viewBox="0 0 12 13"><path d="M6 0.8L11 2.6V6.3C11 9.2 8.8 11.3 6 12.2C3.2 11.3 1 9.2 1 6.3V2.6Z" fill="none" stroke="#c4c4c4" stroke-width="1"/><path d="M6 0.8V6.5H1V2.6Z" fill="#c4c4c4"/><path d="M6 6.5H11C11 9.2 8.8 11.3 6 12.2Z" fill="#c4c4c4"/></svg>
<div class="t" id="t79" style="left:237.30px;top:544.22px;font-size:6.40px;color:#c7c7c7;transform:scaleX(0.9873)">Security</div>
<svg class="a" style="left:298.50px;top:530.00px;" width="14" height="11" viewBox="0 0 14 11"><circle cx="4.3" cy="2.6" r="2.2" fill="#c4c4c4"/><path d="M0.3 10.5V8.5C0.3 6.8 1.5 5.8 3 5.8H5.6C7.1 5.8 8.3 6.8 8.3 8.5V10.5Z" fill="#c4c4c4"/><circle cx="10.2" cy="3.4" r="1.9" fill="#c4c4c4"/><path d="M9 10.5V8.3C9 7.5 8.8 6.9 8.4 6.4H11.6C12.8 6.4 13.6 7.2 13.6 8.4V10.5Z" fill="#c4c4c4"/></svg>
<div class="t" id="t80" style="left:313.60px;top:530.80px;font-size:6.20px;color:#c7c7c7;transform:scaleX(1.0594)">24</div>
<div class="t" id="t81" style="left:288.60px;top:544.22px;font-size:6.40px;color:#c7c7c7">Participants</div>
<svg class="a" style="left:331.00px;top:533.00px;" width="5" height="4" viewBox="0 0 5 4"><path d="M0.7 3L2.5 1L4.3 3" stroke="#bbb" fill="none" stroke-width="0.9"/></svg>
<svg class="a" style="left:358.00px;top:529.00px;" width="12" height="12" viewBox="0 0 12 12"><rect x="0.3" y="0.5" width="11.4" height="8" rx="1.5" fill="#c4c4c4"/><path d="M3 8.3L3 11.5L6 8.3Z" fill="#c4c4c4"/></svg>
<div class="t" id="t82" style="left:357.10px;top:544.22px;font-size:6.40px;color:#c7c7c7;transform:scaleX(0.9778)">Chat</div>
<svg class="a" style="left:379.00px;top:533.00px;" width="5" height="4" viewBox="0 0 5 4"><path d="M0.7 3L2.5 1L4.3 3" stroke="#bbb" fill="none" stroke-width="0.9"/></svg>
<div class="a" style="left:407.00px;top:530.00px;width:13.00px;height:9.00px;background:#1fd35c;border-radius:1.5px"></div>
<svg class="a" style="left:410.50px;top:531.00px;" width="6" height="7" viewBox="0 0 6 7"><path d="M3 6.5V1.2M1 3.2L3 1L5 3.2" stroke="#0c2a14" stroke-width="1.1" fill="none"/></svg>
<div class="t" id="t83" style="left:395.20px;top:544.22px;font-size:6.40px;color:#22d35e;transform:scaleX(0.9494)">Share Screen</div>
<svg class="a" style="left:431.00px;top:533.00px;" width="5" height="4" viewBox="0 0 5 4"><path d="M0.7 3L2.5 1L4.3 3" stroke="#bbb" fill="none" stroke-width="0.9"/></svg>
<svg class="a" style="left:455.00px;top:529.00px;" width="12" height="12" viewBox="0 0 12 12"><circle cx="6" cy="6" r="5.2" fill="none" stroke="#c4c4c4" stroke-width="1"/><circle cx="6" cy="6" r="3.7" fill="#c4c4c4"/></svg>
<div class="t" id="t84" style="left:451.10px;top:544.22px;font-size:6.40px;color:#c7c7c7;transform:scaleX(0.9850)">Record</div>
<div class="a" style="left:501.00px;top:530.00px;width:13.50px;height:9.00px;background:#c4c4c4;border-radius:1.5px"></div>
<div class="t" id="t85" style="left:503.60px;top:534.00px;font-size:4.80px;color:#333;font-weight:bold">CC</div>
<div class="t" id="t86" style="left:486.80px;top:544.22px;font-size:6.40px;color:#c7c7c7;transform:scaleX(0.9864)">Show Captions</div>
<svg class="a" style="left:525.00px;top:533.00px;" width="5" height="4" viewBox="0 0 5 4"><path d="M0.7 3L2.5 1L4.3 3" stroke="#bbb" fill="none" stroke-width="0.9"/></svg>
<svg class="a" style="left:549.00px;top:528.00px;" width="13" height="13" viewBox="0 0 13 13"><circle cx="5.8" cy="7.2" r="5" fill="#c4c4c4"/><circle cx="4.2" cy="6.2" r="0.7" fill="#333"/><circle cx="7.4" cy="6.2" r="0.7" fill="#333"/><path d="M3.6 8.2C4.3 9.6 7.3 9.6 8 8.2" stroke="#333" fill="none" stroke-width="0.8"/><path d="M10.5 0.5V4M8.8 2.2H12.3" stroke="#c4c4c4" stroke-width="1"/></svg>
<div class="t" id="t87" style="left:540.60px;top:544.22px;font-size:6.40px;color:#c7c7c7;transform:scaleX(0.9640)">Reactions</div>
<svg class="a" style="left:592.00px;top:529.00px;" width="12" height="12" viewBox="0 0 12 12"><path d="M5 1.2H2.5C1.7 1.2 1.2 1.7 1.2 2.5V5M1.2 7V9.5C1.2 10.3 1.7 10.8 2.5 10.8H5M7 10.8H9.5C10.3 10.8 10.8 10.3 10.8 9.5V7" stroke="#c4c4c4" fill="none" stroke-width="1.1"/><circle cx="9" cy="3" r="1.8" fill="none" stroke="#c4c4c4" stroke-width="1"/></svg>
<div class="t" id="t88" style="left:589.90px;top:544.22px;font-size:6.40px;color:#c7c7c7;transform:scaleX(1.0084)">Apps</div>
<svg class="a" style="left:610.00px;top:533.00px;" width="5" height="4" viewBox="0 0 5 4"><path d="M0.7 3L2.5 1L4.3 3" stroke="#bbb" fill="none" stroke-width="0.9"/></svg>
<svg class="a" style="left:639.00px;top:529.00px;" width="13" height="12" viewBox="0 0 13 12"><rect x="0.8" y="0.8" width="11.4" height="8.2" rx="1.2" fill="none" stroke="#c4c4c4" stroke-width="1.1"/><path d="M7 10.5H12" stroke="#c4c4c4" stroke-width="1.3"/></svg>
<div class="t" id="t89" style="left:626.70px;top:544.22px;font-size:6.40px;color:#c7c7c7;transform:scaleX(1.0114)">Whiteboards</div>
<svg class="a" style="left:662.00px;top:533.00px;" width="5" height="4" viewBox="0 0 5 4"><path d="M0.7 3L2.5 1L4.3 3" stroke="#bbb" fill="none" stroke-width="0.9"/></svg>
<div class="a" style="left:813.40px;top:532.70px;width:32.50px;height:14.20px;background:#c8312b;border-radius:3px"></div>
<div class="t" id="t90" style="left:824.00px;top:537.21px;font-size:6.80px;color:#fff;font-weight:bold;transform:scaleX(0.8409)">End</div>
<div class="a" style="left:0.00px;top:554.00px;width:1024.00px;height:22.00px;background:#182c30"></div>
<div class="a" style="left:0.00px;top:554.00px;width:1024.00px;height:1.00px;background:#22393d"></div>
<svg class="a" style="left:8.00px;top:561.00px;" width="10" height="10" viewBox="0 0 10 10"><rect x="0" y="0" width="4.6" height="4.6" fill="#e8eef0"/><rect x="5.4" y="0" width="4.6" height="4.6" fill="#e8eef0"/><rect x="0" y="5.4" width="4.6" height="4.6" fill="#e8eef0"/><rect x="5.4" y="5.4" width="4.6" height="4.6" fill="#e8eef0"/></svg>
<div class="a" style="left:26.00px;top:555.00px;width:153.00px;height:21.00px;background:#f1f1f1"></div>
<svg class="a" style="left:32.00px;top:560.00px;" width="10" height="10" viewBox="0 0 10 10"><circle cx="6" cy="4" r="3" fill="none" stroke="#333" stroke-width="1"/><path d="M3.8 6.2L1 9" stroke="#333" stroke-width="1.1"/></svg>
<div class="t" id="t91" style="left:46.90px;top:562.81px;font-size:8.00px;color:#444;transform:scaleX(1.0606)">Αναζήτηση</div>
<div class="a" style="left:139.00px;top:557.00px;width:38.00px;height:17.00px;background:#1f1f1f;border-radius:9px"></div>
<div class="a" style="left:152.00px;top:560.00px;width:11.00px;height:11.00px;background:conic-gradient(#f26b3a,#e94fa8,#8a5cf6,#2f9bf0,#3fd07a,#f2c94c,#f26b3a);border-radius:4px"></div>
<svg class="a" style="left:187.00px;top:560.00px;" width="10" height="10" viewBox="0 0 10 10"><rect x="1" y="1.5" width="6" height="7" fill="none" stroke="#ddd" stroke-width="1"/><path d="M0 1.5H8M0 8.5H8M9.2 1V3M9.2 4V6M9.2 7V9" stroke="#ddd" stroke-width="0.9"/></svg>
<div class="a" style="left:213px;top:559px;width:12px;height:12px;background:#f4f4f4;border-radius:2px"></div>
<div class="a" style="left:216px;top:562px;width:3px;height:3px;background:#f25022"></div><div class="a" style="left:219.5px;top:562px;width:3px;height:3px;background:#7fba00"></div><div class="a" style="left:216px;top:565.5px;width:3px;height:3px;background:#00a4ef"></div><div class="a" style="left:219.5px;top:565.5px;width:3px;height:3px;background:#ffb900"></div>
<div class="a" style="left:239px;top:559px;width:12px;height:11px;background:#f7c04a;border-radius:1px"></div>
<div class="a" style="left:239px;top:562px;width:12px;height:2px;background:#e8a838"></div>
<div class="a" style="left:243px;top:566px;width:4px;height:3px;background:#2f7fd8"></div>
<svg class="a" style="left:264.5px;top:558.5px" width="14" height="14" viewBox="0 0 14 14"><defs><linearGradient id="eg" x1="0" y1="1" x2="1" y2="0"><stop offset="0" stop-color="#1460c0"/><stop offset=".55" stop-color="#2a9be0"/><stop offset="1" stop-color="#52d46a"/></linearGradient></defs><circle cx="7" cy="7" r="6.5" fill="url(#eg)"/><path d="M4 8.2C4 6 5.5 4.8 7.2 4.8C9 4.8 10 6 10 7.3" stroke="#182c30" stroke-width="2.2" fill="none"/><circle cx="6.2" cy="7.6" r="1.6" fill="#182c30"/></svg>
<svg class="a" style="left:290.5px;top:558.5px" width="14" height="14" viewBox="0 0 14 14"><rect x="0.5" y="0.5" width="11" height="12.5" fill="#e6f2e6" stroke="#4caa5a" stroke-width="0.8"/><rect x="1.5" y="1.5" width="9" height="1.5" fill="#a8d8a8"/><path d="M2.5 4.5L6 10M6 4.5L2.5 10" stroke="#1f7a3a" stroke-width="1.5"/><path d="M8 5H11M8 7.5H11M8 10H11" stroke="#3a9a4a" stroke-width="1"/><rect x="11.5" y="4" width="1.5" height="9" fill="#d8e8d8"/></svg>
<svg class="a" style="left:316.5px;top:558.5px" width="14" height="14" viewBox="0 0 14 14"><rect x="1" y="0.5" width="11.5" height="12.5" fill="#e6ecf8" stroke="#8aa6d8" stroke-width="0.6"/><rect x="4" y="3" width="7" height="7" fill="#3766bb"/><path d="M5 4.5L6 8.5L7.5 5.5L9 8.5L10 4.5" stroke="#dfe8ff" stroke-width="0.7" fill="none"/><rect x="0.5" y="2" width="3.5" height="9" fill="#4c7fd0"/></svg>
<div class="a" style="left:346px;top:560px;width:9px;height:9px;background:#2060b0;transform:rotate(45deg)"></div>
<div class="a" style="left:372px;top:560px;width:9px;height:9px;background:#3a9a3a;transform:rotate(45deg)"></div>
<div class="a" style="left:396px;top:558px;width:13px;height:13px;border-radius:50%;background:radial-gradient(circle,#3b7de0 0 2.2px,#fff 2.3px 3.2px,transparent 3.3px),conic-gradient(from -30deg,#e64236 0 120deg,#f8c235 120deg 240deg,#2ba24c 240deg 360deg)"></div>
<div class="a" style="left:403px;top:565px;width:7px;height:7px;border-radius:50%;background:#bbb;border:1px solid #777"></div>
<div class="a" style="left:422px;top:558px;width:13px;height:13px;background:#1f86d6;border-radius:2px"></div>
<div class="a" style="left:425px;top:561px;width:7px;height:7px;border-radius:50%;border:2px solid #fff"></div>
<div class="a" style="left:448px;top:558px;width:13px;height:13px;background:#161616;border-radius:3px"></div>
<svg class="a" style="left:449px;top:561px" width="11" height="7" viewBox="0 0 11 7"><path d="M1 1.5C1 6 4.5 6 5.5 3.5C6.5 1 10 1 10 5.5" stroke="#31c1ec" stroke-width="1.6" fill="none"/><path d="M1 1.5C2 5 4 5.5 5.5 3.5" stroke="#2fd07a" stroke-width="1.2" fill="none"/></svg>
<div class="a" style="left:468px;top:555px;width:24px;height:21px;background:#4a5c60;border-radius:2px"></div>
<div class="a" style="left:474px;top:558.5px;width:13px;height:13px;border-radius:50%;background:#2d6cf5"></div>
<div class="a" style="left:397px;top:575px;width:12px;height:1px;background:#9ccfe0"></div>
<div class="a" style="left:423px;top:575px;width:12px;height:1px;background:#9ccfe0"></div>
<div class="a" style="left:449px;top:575px;width:12px;height:1px;background:#9ccfe0"></div>
<div class="a" style="left:472px;top:575px;width:16px;height:1px;background:#9ccfe0"></div>
<div class="t" id="t92" style="left:347.30px;top:562.51px;font-size:6.00px;color:#fff;font-weight:bold">M</div>
<div class="t" id="t93" style="left:374.00px;top:562.01px;font-size:7.00px;color:#fff;font-weight:bold">n</div>
<div class="t" id="t94" style="left:477.30px;top:561.51px;font-size:8.50px;color:#fff;font-weight:bold">Z</div>
<svg class="a" style="left:785.00px;top:559.00px;" width="14" height="10" viewBox="0 0 14 10"><path d="M3 9.5C1.3 9.5 0.3 8.5 0.3 7.2S1.3 5 2.8 5C3 2.5 4.8 0.8 7 0.8C9 0.8 10.5 2.2 10.8 4C12.5 4 13.7 5.2 13.7 6.8S12.5 9.5 11 9.5Z" fill="#cfd8e6"/></svg>
<div class="t" id="t95" style="left:802.50px;top:561.51px;font-size:8.30px;color:#e6eaeb;transform:scaleX(0.8357)">14°C</div>
<div class="t" id="t96" style="left:822.70px;top:561.51px;font-size:8.30px;color:#e6eaeb;transform:scaleX(0.9028)">Νεφώσεις</div>
<svg class="a" style="left:868.00px;top:562.00px;" width="8" height="5" viewBox="0 0 8 5"><path d="M0.7 4.3L4 1L7.3 4.3" stroke="#ddd" fill="none" stroke-width="1"/></svg>
<div class="a" style="left:881.00px;top:560.00px;width:8.50px;height:8.50px;background:#3f9ee8;border-radius:50%"></div>
<div class="a" style="left:893.00px;top:561.00px;width:9.00px;height:7.00px;background:#c7cdd1;border-radius:4px"></div>
<div class="a" style="left:898.00px;top:564.00px;width:5.00px;height:5.00px;background:#3c8dd8;border-radius:50%"></div>
<svg class="a" style="left:905.00px;top:560.00px;" width="11" height="10" viewBox="0 0 11 10"><rect x="3" y="0.5" width="7.5" height="5.5" fill="none" stroke="#ddd" stroke-width="0.9"/><rect x="0.5" y="2.5" width="4" height="5" fill="none" stroke="#ddd" stroke-width="0.9"/><path d="M5 8H9" stroke="#ddd" stroke-width="0.9"/></svg>
<svg class="a" style="left:919.00px;top:560.00px;" width="9" height="9" viewBox="0 0 9 9"><path d="M0.5 3H2.5L4.5 0.8V8.2L2.5 6H0.5Z" fill="none" stroke="#ddd" stroke-width="0.9"/><path d="M5.8 3L8.5 6M8.5 3L5.8 6" stroke="#ddd" stroke-width="0.9"/></svg>
<svg class="a" style="left:931.00px;top:561.00px;" width="11" height="8" viewBox="0 0 11 8"><path d="M3 7.5C1.5 7.5 0.5 6.7 0.5 5.5S1.5 3.7 2.7 3.7C3 1.7 4.5 0.5 6.2 0.5C7.8 0.5 9 1.7 9.3 3.2C10.7 3.2 10.5 4.2 10.5 5.4S10.2 7.5 9.3 7.5Z" fill="#eee"/><path d="M5.6 6.5V3.5M4.4 4.6L5.6 3.4L6.8 4.6" stroke="#182c30" stroke-width="0.8" fill="none"/></svg>
<div class="t" id="t97" style="left:947.60px;top:562.51px;font-size:7.50px;color:#dfe3e4;transform:scaleX(0.8587)">ΕΛ</div>
<div class="t" id="t98" style="left:968.40px;top:556.32px;font-size:7.00px;color:#e6eaeb;transform:scaleX(0.8714)">6:18 μμ</div>
<div class="t" id="t99" style="left:965.00px;top:566.70px;font-size:7.60px;color:#e6eaeb;transform:scaleX(0.8166)">12/2/2024</div>
<svg class="a" style="left:1001.50px;top:560.00px;" width="13" height="13" viewBox="0 0 13 13"><path d="M0.5 0.5H9.5V7H4L2 9V7H0.5Z" fill="#e8e8e8"/><path d="M2 2.5H8M2 4.5H8" stroke="#182c30" stroke-width="0.7"/><circle cx="8.8" cy="8.8" r="3.3" fill="#2a2a2a" stroke="#888" stroke-width="0.6"/></svg>
<div class="t" id="t100" style="left:1007.50px;top:567.00px;font-size:5.00px;color:#fff">7</div>
<div class="a" style="left:852.00px;top:16.00px;width:170.00px;height:538.00px;background:#fff"></div>
<div class="a" style="left:852.00px;top:16.00px;width:1.00px;height:538.00px;background:#c6c6c6"></div>
<div class="a" style="left:1022.00px;top:16.00px;width:2.00px;height:538.00px;background:#1b525b"></div>
<svg class="a" style="left:862.00px;top:26.50px;" width="6" height="4" viewBox="0 0 6 4"><path d="M0.5 0.5L3 3L5.5 0.5" stroke="#555" fill="none" stroke-width="0.9"/></svg>
<div class="t" id="t101" style="left:911.00px;top:25.01px;font-size:7.30px;color:#232323;font-weight:bold;transform:scaleX(0.9369)">Participants (24)</div>
<div class="a" style="left:862.20px;top:45.00px;width:152.20px;height:17.70px;background:#fff;border:1px solid #c9c9d6;border-radius:4px"></div>
<svg class="a" style="left:868.00px;top:49.50px;" width="8" height="8" viewBox="0 0 8 8"><circle cx="3.3" cy="3.3" r="2.5" fill="none" stroke="#707070" stroke-width="0.9"/><path d="M5.1 5.1L6.8 6.9" stroke="#707070" stroke-width="0.9"/></svg>
<div class="t" id="t102" style="left:877.70px;top:50.10px;font-size:7.50px;color:#6b6b6b;transform:scaleX(0.9262)">Find a participant</div>
<div class="a" style="left:1018.00px;top:495.00px;width:3.60px;height:29.00px;background:#efeff1;border-radius:2px"></div>
<div class="a" style="left:1018.00px;top:63.50px;width:3.60px;height:432.00px;background:#b2b2b6;border-radius:2px"></div>
<div class="a" style="left:864px;top:67.0px;width:14px;height:14px;background:#fff"><div class="a" style="left:0.5px;top:3px;width:4px;height:8px;border-radius:2px;background:#2a2a2a"></div><div class="a" style="left:5px;top:1px;width:5px;height:12px;background:repeating-linear-gradient(180deg,#aaa 0 1px,#e6e6e6 1px 2px)"></div><div class="a" style="left:11px;top:4px;width:2px;height:6px;background:#b8d8b0"></div></div>
<div class="t" id="t103" style="left:885.00px;top:71.11px;font-size:7.40px;color:#3d3d45;transform:scaleX(0.8716);-webkit-text-stroke:0.12px #3d3d45">EPIMELITIRIO FOKID...  (Host, me)</div>
<svg class="a" style="left:989.00px;top:69.50px;" width="9" height="9" viewBox="0 0 9 9"><path d="M3.2 4.5V1.9C3.2 1.1 3.8 0.6 4.5 0.6S5.8 1.1 5.8 1.9V3.5M3.9 5.3C4.1 5.5 4.3 5.6 4.5 5.6C5.2 5.6 5.8 5.1 5.8 4.4" fill="none" stroke="#e6605f" stroke-width="0.75"/><path d="M2 4.4C2 6 3.1 7.1 4.5 7.1S7 6 7 4.4M4.5 7.1V8.5M3.2 8.5H5.8M0.9 8.4L8.1 0.6" fill="none" stroke="#e6605f" stroke-width="0.75"/></svg>
<svg class="a" style="left:1001.00px;top:69.50px;" width="10" height="9" viewBox="0 0 10 9"><path d="M6 2.1H1.6C1 2.1 0.6 2.5 0.6 3.1V6.6C0.6 7.2 1 7.6 1.6 7.6H6.2C6.8 7.6 7.2 7.2 7.2 6.6V4.2" fill="none" stroke="#e6605f" stroke-width="0.75"/><path d="M7.2 4.3L9.5 3V7L7.2 5.6M1.2 8.5L8.8 0.6" fill="none" stroke="#e6605f" stroke-width="0.75"/></svg>
<div class="a" style="left:864.00px;top:88.85px;width:14.00px;height:14.00px;background:#2b7cc2;border-radius:3.5px"></div>
<div class="a" style="left:864px;top:89.1px;width:14px;height:14px;color:#fff;font-size:7px;font-weight:bold;line-height:14px;text-align:center">A</div>
<div class="t" id="t104" style="left:885.00px;top:92.95px;font-size:7.40px;color:#3d3d45;transform:scaleX(0.8577);-webkit-text-stroke:0.12px #3d3d45">AN.ΔΙΑ</div>
<div class="a" style="left:976.00px;top:92.85px;width:9.00px;height:6.00px;background:#1fa845;border-radius:1px"></div>
<svg class="a" style="left:978.00px;top:93.35px;" width="5" height="5" viewBox="0 0 5 5"><path d="M2.5 4.5V1M1 2.3L2.5 0.8L4 2.3" stroke="#fff" stroke-width="0.8" fill="none"/></svg>
<svg class="a" style="left:991.00px;top:91.35px;" width="6" height="9" viewBox="0 0 6 9"><rect x="1.5" y="0.3" width="3" height="5.2" rx="1.5" fill="#777"/><path d="M0.5 4C0.5 6 1.8 7 3 7S5.5 6 5.5 4M3 7V8.8" stroke="#777" fill="none" stroke-width="0.7"/></svg>
<svg class="a" style="left:1001.00px;top:91.35px;" width="11" height="9" viewBox="0 0 11 9"><rect x="0.5" y="2" width="7" height="5.5" rx="1" fill="none" stroke="#888" stroke-width="0.8"/><path d="M7.5 4L10 2.5V7L7.5 5.5" fill="none" stroke="#888" stroke-width="0.8"/></svg>
<div class="a" style="left:864.00px;top:110.70px;width:14.00px;height:14.00px;background:#2b7cc2;border-radius:3.5px"></div>
<div class="a" style="left:864px;top:111.0px;width:14px;height:14px;color:#fff;font-size:6.6px;font-weight:bold;line-height:14px;text-align:center">3S</div>
<div class="t" id="t105" style="left:885.00px;top:114.80px;font-size:7.40px;color:#3d3d45;transform:scaleX(0.9302);-webkit-text-stroke:0.12px #3d3d45">3. Stylianos Spanopoulos</div>
<svg class="a" style="left:989.00px;top:113.20px;" width="9" height="9" viewBox="0 0 9 9"><path d="M3.2 4.5V1.9C3.2 1.1 3.8 0.6 4.5 0.6S5.8 1.1 5.8 1.9V3.5M3.9 5.3C4.1 5.5 4.3 5.6 4.5 5.6C5.2 5.6 5.8 5.1 5.8 4.4" fill="none" stroke="#e6605f" stroke-width="0.75"/><path d="M2 4.4C2 6 3.1 7.1 4.5 7.1S7 6 7 4.4M4.5 7.1V8.5M3.2 8.5H5.8M0.9 8.4L8.1 0.6" fill="none" stroke="#e6605f" stroke-width="0.75"/></svg>
<svg class="a" style="left:1001.00px;top:113.20px;" width="10" height="9" viewBox="0 0 10 9"><path d="M6 2.1H1.6C1 2.1 0.6 2.5 0.6 3.1V6.6C0.6 7.2 1 7.6 1.6 7.6H6.2C6.8 7.6 7.2 7.2 7.2 6.6V4.2" fill="none" stroke="#e6605f" stroke-width="0.75"/><path d="M7.2 4.3L9.5 3V7L7.2 5.6M1.2 8.5L8.8 0.6" fill="none" stroke="#e6605f" stroke-width="0.75"/></svg>
<div class="a" style="left:864.00px;top:132.55px;width:14.00px;height:14.00px;background:#f39c1e;border-radius:3.5px"></div>
<div class="a" style="left:864px;top:132.9px;width:14px;height:14px;color:#fff;font-size:6.6px;font-weight:bold;line-height:14px;text-align:center">AT</div>
<div class="t" id="t106" style="left:885.00px;top:136.66px;font-size:7.40px;color:#3d3d45;transform:scaleX(0.9291);-webkit-text-stroke:0.12px #3d3d45">Angelos Tapanlis</div>
<svg class="a" style="left:989.00px;top:135.05px;" width="9" height="9" viewBox="0 0 9 9"><path d="M3.2 4.5V1.9C3.2 1.1 3.8 0.6 4.5 0.6S5.8 1.1 5.8 1.9V3.5M3.9 5.3C4.1 5.5 4.3 5.6 4.5 5.6C5.2 5.6 5.8 5.1 5.8 4.4" fill="none" stroke="#e6605f" stroke-width="0.75"/><path d="M2 4.4C2 6 3.1 7.1 4.5 7.1S7 6 7 4.4M4.5 7.1V8.5M3.2 8.5H5.8M0.9 8.4L8.1 0.6" fill="none" stroke="#e6605f" stroke-width="0.75"/></svg>
<svg class="a" style="left:1001.00px;top:135.05px;" width="10" height="9" viewBox="0 0 10 9"><path d="M6 2.1H1.6C1 2.1 0.6 2.5 0.6 3.1V6.6C0.6 7.2 1 7.6 1.6 7.6H6.2C6.8 7.6 7.2 7.2 7.2 6.6V4.2" fill="none" stroke="#e6605f" stroke-width="0.75"/><path d="M7.2 4.3L9.5 3V7L7.2 5.6M1.2 8.5L8.8 0.6" fill="none" stroke="#e6605f" stroke-width="0.75"/></svg>
<div class="a" style="left:864.00px;top:154.40px;width:14.00px;height:14.00px;background:#f39c1e;border-radius:3.5px"></div>
<div class="a" style="left:864px;top:154.7px;width:14px;height:14px;color:#fff;font-size:6.6px;font-weight:bold;line-height:14px;text-align:center">FP</div>
<div class="t" id="t107" style="left:885.00px;top:158.50px;font-size:7.40px;color:#3d3d45;transform:scaleX(0.8516);-webkit-text-stroke:0.12px #3d3d45">Fe_niou P</div>
<svg class="a" style="left:989.00px;top:156.90px;" width="9" height="9" viewBox="0 0 9 9"><path d="M3.2 4.5V1.9C3.2 1.1 3.8 0.6 4.5 0.6S5.8 1.1 5.8 1.9V3.5M3.9 5.3C4.1 5.5 4.3 5.6 4.5 5.6C5.2 5.6 5.8 5.1 5.8 4.4" fill="none" stroke="#e6605f" stroke-width="0.75"/><path d="M2 4.4C2 6 3.1 7.1 4.5 7.1S7 6 7 4.4M4.5 7.1V8.5M3.2 8.5H5.8M0.9 8.4L8.1 0.6" fill="none" stroke="#e6605f" stroke-width="0.75"/></svg>
<svg class="a" style="left:1001.00px;top:156.90px;" width="10" height="9" viewBox="0 0 10 9"><path d="M6 2.1H1.6C1 2.1 0.6 2.5 0.6 3.1V6.6C0.6 7.2 1 7.6 1.6 7.6H6.2C6.8 7.6 7.2 7.2 7.2 6.6V4.2" fill="none" stroke="#e6605f" stroke-width="0.75"/><path d="M7.2 4.3L9.5 3V7L7.2 5.6M1.2 8.5L8.8 0.6" fill="none" stroke="#e6605f" stroke-width="0.75"/></svg>
<div class="a" style="left:864.00px;top:176.25px;width:14.00px;height:14.00px;background:#2ea84f;border-radius:3.5px"></div>
<div class="a" style="left:864px;top:176.6px;width:14px;height:14px;color:#fff;font-size:7px;font-weight:bold;line-height:14px;text-align:center">F</div>
<div class="t" id="t108" style="left:885.00px;top:180.36px;font-size:7.40px;color:#3d3d45;transform:scaleX(0.9672);-webkit-text-stroke:0.12px #3d3d45">figeta</div>
<svg class="a" style="left:989.00px;top:178.75px;" width="9" height="9" viewBox="0 0 9 9"><path d="M3.2 4.5V1.9C3.2 1.1 3.8 0.6 4.5 0.6S5.8 1.1 5.8 1.9V3.5M3.9 5.3C4.1 5.5 4.3 5.6 4.5 5.6C5.2 5.6 5.8 5.1 5.8 4.4" fill="none" stroke="#e6605f" stroke-width="0.75"/><path d="M2 4.4C2 6 3.1 7.1 4.5 7.1S7 6 7 4.4M4.5 7.1V8.5M3.2 8.5H5.8M0.9 8.4L8.1 0.6" fill="none" stroke="#e6605f" stroke-width="0.75"/></svg>
<svg class="a" style="left:1001.00px;top:178.75px;" width="10" height="9" viewBox="0 0 10 9"><path d="M6 2.1H1.6C1 2.1 0.6 2.5 0.6 3.1V6.6C0.6 7.2 1 7.6 1.6 7.6H6.2C6.8 7.6 7.2 7.2 7.2 6.6V4.2" fill="none" stroke="#e6605f" stroke-width="0.75"/><path d="M7.2 4.3L9.5 3V7L7.2 5.6M1.2 8.5L8.8 0.6" fill="none" stroke="#e6605f" stroke-width="0.75"/></svg>
<div class="a" style="left:864.00px;top:198.10px;width:14.00px;height:14.00px;background:#d9621d;border-radius:3.5px"></div>
<div class="a" style="left:864px;top:198.4px;width:14px;height:14px;color:#fff;font-size:7px;font-weight:bold;line-height:14px;text-align:center">G</div>
<div class="t" id="t109" style="left:885.00px;top:202.20px;font-size:7.40px;color:#3d3d45;transform:scaleX(0.8134);-webkit-text-stroke:0.12px #3d3d45">GATOS</div>
<svg class="a" style="left:989.00px;top:200.60px;" width="9" height="9" viewBox="0 0 9 9"><path d="M3.2 4.5V1.9C3.2 1.1 3.8 0.6 4.5 0.6S5.8 1.1 5.8 1.9V3.5M3.9 5.3C4.1 5.5 4.3 5.6 4.5 5.6C5.2 5.6 5.8 5.1 5.8 4.4" fill="none" stroke="#e6605f" stroke-width="0.75"/><path d="M2 4.4C2 6 3.1 7.1 4.5 7.1S7 6 7 4.4M4.5 7.1V8.5M3.2 8.5H5.8M0.9 8.4L8.1 0.6" fill="none" stroke="#e6605f" stroke-width="0.75"/></svg>
<svg class="a" style="left:1001.00px;top:200.60px;" width="10" height="9" viewBox="0 0 10 9"><path d="M6 2.1H1.6C1 2.1 0.6 2.5 0.6 3.1V6.6C0.6 7.2 1 7.6 1.6 7.6H6.2C6.8 7.6 7.2 7.2 7.2 6.6V4.2" fill="none" stroke="#e6605f" stroke-width="0.75"/><path d="M7.2 4.3L9.5 3V7L7.2 5.6M1.2 8.5L8.8 0.6" fill="none" stroke="#e6605f" stroke-width="0.75"/></svg>
<div class="a" style="left:864.00px;top:219.95px;width:14.00px;height:14.00px;background:#f39c1e;border-radius:3.5px"></div>
<div class="a" style="left:864px;top:220.3px;width:14px;height:14px;color:#fff;font-size:6.6px;font-weight:bold;line-height:14px;text-align:center">GT</div>
<div class="t" id="t110" style="left:885.00px;top:224.05px;font-size:7.40px;color:#3d3d45;transform:scaleX(0.8559);-webkit-text-stroke:0.12px #3d3d45">GEORGIOS THEODOROPOULOS</div>
<svg class="a" style="left:989.00px;top:222.45px;" width="9" height="9" viewBox="0 0 9 9"><path d="M3.2 4.5V1.9C3.2 1.1 3.8 0.6 4.5 0.6S5.8 1.1 5.8 1.9V3.5M3.9 5.3C4.1 5.5 4.3 5.6 4.5 5.6C5.2 5.6 5.8 5.1 5.8 4.4" fill="none" stroke="#e6605f" stroke-width="0.75"/><path d="M2 4.4C2 6 3.1 7.1 4.5 7.1S7 6 7 4.4M4.5 7.1V8.5M3.2 8.5H5.8M0.9 8.4L8.1 0.6" fill="none" stroke="#e6605f" stroke-width="0.75"/></svg>
<svg class="a" style="left:1001.00px;top:222.45px;" width="10" height="9" viewBox="0 0 10 9"><path d="M6 2.1H1.6C1 2.1 0.6 2.5 0.6 3.1V6.6C0.6 7.2 1 7.6 1.6 7.6H6.2C6.8 7.6 7.2 7.2 7.2 6.6V4.2" fill="none" stroke="#e6605f" stroke-width="0.75"/><path d="M7.2 4.3L9.5 3V7L7.2 5.6M1.2 8.5L8.8 0.6" fill="none" stroke="#e6605f" stroke-width="0.75"/></svg>
<div class="a" style="left:864.00px;top:241.80px;width:14.00px;height:14.00px;background:#f39c1e;border-radius:3.5px"></div>
<div class="a" style="left:864px;top:242.1px;width:14px;height:14px;color:#fff;font-size:6.6px;font-weight:bold;line-height:14px;text-align:center">KK</div>
<div class="t" id="t111" style="left:885.00px;top:245.91px;font-size:7.40px;color:#3d3d45;transform:scaleX(0.9223);-webkit-text-stroke:0.12px #3d3d45">Konstantina Koispe "Yiannis Vo...</div>
<svg class="a" style="left:989.00px;top:244.30px;" width="9" height="9" viewBox="0 0 9 9"><path d="M3.2 4.5V1.9C3.2 1.1 3.8 0.6 4.5 0.6S5.8 1.1 5.8 1.9V3.5M3.9 5.3C4.1 5.5 4.3 5.6 4.5 5.6C5.2 5.6 5.8 5.1 5.8 4.4" fill="none" stroke="#e6605f" stroke-width="0.75"/><path d="M2 4.4C2 6 3.1 7.1 4.5 7.1S7 6 7 4.4M4.5 7.1V8.5M3.2 8.5H5.8M0.9 8.4L8.1 0.6" fill="none" stroke="#e6605f" stroke-width="0.75"/></svg>
<svg class="a" style="left:1001.00px;top:244.30px;" width="10" height="9" viewBox="0 0 10 9"><path d="M6 2.1H1.6C1 2.1 0.6 2.5 0.6 3.1V6.6C0.6 7.2 1 7.6 1.6 7.6H6.2C6.8 7.6 7.2 7.2 7.2 6.6V4.2" fill="none" stroke="#e6605f" stroke-width="0.75"/><path d="M7.2 4.3L9.5 3V7L7.2 5.6M1.2 8.5L8.8 0.6" fill="none" stroke="#e6605f" stroke-width="0.75"/></svg>
<div class="a" style="left:864.00px;top:263.65px;width:14.00px;height:14.00px;background:#2b7cc2;border-radius:3.5px"></div>
<div class="a" style="left:864px;top:263.9px;width:14px;height:14px;color:#fff;font-size:6.6px;font-weight:bold;line-height:14px;text-align:center">NS</div>
<div class="t" id="t112" style="left:885.00px;top:267.75px;font-size:7.40px;color:#3d3d45;transform:scaleX(0.9223);-webkit-text-stroke:0.12px #3d3d45">Nikos Staikos</div>
<svg class="a" style="left:989.00px;top:266.15px;" width="9" height="9" viewBox="0 0 9 9"><path d="M3.2 4.5V1.9C3.2 1.1 3.8 0.6 4.5 0.6S5.8 1.1 5.8 1.9V3.5M3.9 5.3C4.1 5.5 4.3 5.6 4.5 5.6C5.2 5.6 5.8 5.1 5.8 4.4" fill="none" stroke="#e6605f" stroke-width="0.75"/><path d="M2 4.4C2 6 3.1 7.1 4.5 7.1S7 6 7 4.4M4.5 7.1V8.5M3.2 8.5H5.8M0.9 8.4L8.1 0.6" fill="none" stroke="#e6605f" stroke-width="0.75"/></svg>
<svg class="a" style="left:1001.00px;top:266.15px;" width="10" height="9" viewBox="0 0 10 9"><path d="M6 2.1H1.6C1 2.1 0.6 2.5 0.6 3.1V6.6C0.6 7.2 1 7.6 1.6 7.6H6.2C6.8 7.6 7.2 7.2 7.2 6.6V4.2" fill="none" stroke="#e6605f" stroke-width="0.75"/><path d="M7.2 4.3L9.5 3V7L7.2 5.6M1.2 8.5L8.8 0.6" fill="none" stroke="#e6605f" stroke-width="0.75"/></svg>
<div class="a" style="left:864.00px;top:285.50px;width:14.00px;height:14.00px;background:#2ea84f;border-radius:3.5px"></div>
<div class="a" style="left:864px;top:285.8px;width:14px;height:14px;color:#fff;font-size:7px;font-weight:bold;line-height:14px;text-align:center">U</div>
<div class="t" id="t113" style="left:885.00px;top:289.61px;font-size:7.40px;color:#3d3d45;transform:scaleX(0.9297);-webkit-text-stroke:0.12px #3d3d45">user1</div>
<svg class="a" style="left:1001.00px;top:288.00px;" width="9" height="9" viewBox="0 0 9 9"><path d="M3.2 4.5V1.9C3.2 1.1 3.8 0.6 4.5 0.6S5.8 1.1 5.8 1.9V3.5M3.9 5.3C4.1 5.5 4.3 5.6 4.5 5.6C5.2 5.6 5.8 5.1 5.8 4.4" fill="none" stroke="#e6605f" stroke-width="0.75"/><path d="M2 4.4C2 6 3.1 7.1 4.5 7.1S7 6 7 4.4M4.5 7.1V8.5M3.2 8.5H5.8M0.9 8.4L8.1 0.6" fill="none" stroke="#e6605f" stroke-width="0.75"/></svg>
<div class="a" style="left:864.00px;top:307.35px;width:14.00px;height:14.00px;background:#c93a32;border-radius:3.5px"></div>
<div class="a" style="left:864px;top:307.7px;width:14px;height:14px;color:#fff;font-size:6.6px;font-weight:bold;line-height:14px;text-align:center">ZG</div>
<div class="t" id="t114" style="left:885.00px;top:311.45px;font-size:7.40px;color:#3d3d45;transform:scaleX(0.9670);-webkit-text-stroke:0.12px #3d3d45">zina georgoula</div>
<svg class="a" style="left:989.00px;top:309.85px;" width="9" height="9" viewBox="0 0 9 9"><path d="M3.2 4.5V1.9C3.2 1.1 3.8 0.6 4.5 0.6S5.8 1.1 5.8 1.9V3.5M3.9 5.3C4.1 5.5 4.3 5.6 4.5 5.6C5.2 5.6 5.8 5.1 5.8 4.4" fill="none" stroke="#e6605f" stroke-width="0.75"/><path d="M2 4.4C2 6 3.1 7.1 4.5 7.1S7 6 7 4.4M4.5 7.1V8.5M3.2 8.5H5.8M0.9 8.4L8.1 0.6" fill="none" stroke="#e6605f" stroke-width="0.75"/></svg>
<svg class="a" style="left:1001.00px;top:309.85px;" width="10" height="9" viewBox="0 0 10 9"><path d="M6 2.1H1.6C1 2.1 0.6 2.5 0.6 3.1V6.6C0.6 7.2 1 7.6 1.6 7.6H6.2C6.8 7.6 7.2 7.2 7.2 6.6V4.2" fill="none" stroke="#e6605f" stroke-width="0.75"/><path d="M7.2 4.3L9.5 3V7L7.2 5.6M1.2 8.5L8.8 0.6" fill="none" stroke="#e6605f" stroke-width="0.75"/></svg>
<div class="a" style="left:864.00px;top:329.20px;width:14.00px;height:14.00px;background:#2e3f5c;border-radius:3.5px"></div>
<div class="a" style="left:864px;top:329.5px;width:14px;height:14px;color:#fff;font-size:7px;font-weight:bold;line-height:14px;text-align:center">A</div>
<div class="t" id="t115" style="left:885.00px;top:333.30px;font-size:7.40px;color:#3d3d45;transform:scaleX(0.8795);-webkit-text-stroke:0.12px #3d3d45">ΑΓΓΕΛΙΚΗ ΑΠΟΣΤΟΛΟΠΟΥΛΟΥ</div>
<svg class="a" style="left:989.00px;top:331.70px;" width="9" height="9" viewBox="0 0 9 9"><path d="M3.2 4.5V1.9C3.2 1.1 3.8 0.6 4.5 0.6S5.8 1.1 5.8 1.9V3.5M3.9 5.3C4.1 5.5 4.3 5.6 4.5 5.6C5.2 5.6 5.8 5.1 5.8 4.4" fill="none" stroke="#e6605f" stroke-width="0.75"/><path d="M2 4.4C2 6 3.1 7.1 4.5 7.1S7 6 7 4.4M4.5 7.1V8.5M3.2 8.5H5.8M0.9 8.4L8.1 0.6" fill="none" stroke="#e6605f" stroke-width="0.75"/></svg>
<svg class="a" style="left:1001.00px;top:331.70px;" width="10" height="9" viewBox="0 0 10 9"><path d="M6 2.1H1.6C1 2.1 0.6 2.5 0.6 3.1V6.6C0.6 7.2 1 7.6 1.6 7.6H6.2C6.8 7.6 7.2 7.2 7.2 6.6V4.2" fill="none" stroke="#e6605f" stroke-width="0.75"/><path d="M7.2 4.3L9.5 3V7L7.2 5.6M1.2 8.5L8.8 0.6" fill="none" stroke="#e6605f" stroke-width="0.75"/></svg>
<div class="a" style="left:864.00px;top:351.05px;width:14.00px;height:14.00px;background:#1f9c78;border-radius:3.5px"></div>
<div class="a" style="left:864px;top:351.4px;width:14px;height:14px;color:#fff;font-size:7px;font-weight:bold;line-height:14px;text-align:center">A</div>
<div class="t" id="t116" style="left:885.00px;top:355.16px;font-size:7.40px;color:#3d3d45;transform:scaleX(0.9800);-webkit-text-stroke:0.12px #3d3d45">Αγνιάδης Παναγιώτης</div>
<svg class="a" style="left:989.00px;top:353.55px;" width="9" height="9" viewBox="0 0 9 9"><path d="M3.2 4.5V1.9C3.2 1.1 3.8 0.6 4.5 0.6S5.8 1.1 5.8 1.9V3.5M3.9 5.3C4.1 5.5 4.3 5.6 4.5 5.6C5.2 5.6 5.8 5.1 5.8 4.4" fill="none" stroke="#e6605f" stroke-width="0.75"/><path d="M2 4.4C2 6 3.1 7.1 4.5 7.1S7 6 7 4.4M4.5 7.1V8.5M3.2 8.5H5.8M0.9 8.4L8.1 0.6" fill="none" stroke="#e6605f" stroke-width="0.75"/></svg>
<svg class="a" style="left:1001.00px;top:353.55px;" width="10" height="9" viewBox="0 0 10 9"><path d="M6 2.1H1.6C1 2.1 0.6 2.5 0.6 3.1V6.6C0.6 7.2 1 7.6 1.6 7.6H6.2C6.8 7.6 7.2 7.2 7.2 6.6V4.2" fill="none" stroke="#e6605f" stroke-width="0.75"/><path d="M7.2 4.3L9.5 3V7L7.2 5.6M1.2 8.5L8.8 0.6" fill="none" stroke="#e6605f" stroke-width="0.75"/></svg>
<div class="a" style="left:864px;top:372.9px;width:14px;height:14px;background:#fff"><div class="a" style="left:0.5px;top:3px;width:4px;height:8px;border-radius:2px;background:#2a2a2a"></div><div class="a" style="left:5px;top:1px;width:5px;height:12px;background:repeating-linear-gradient(180deg,#aaa 0 1px,#e6e6e6 1px 2px)"></div><div class="a" style="left:11px;top:4px;width:2px;height:6px;background:#b8d8b0"></div></div>
<div class="t" id="t117" style="left:885.00px;top:377.00px;font-size:7.40px;color:#3d3d45;transform:scaleX(0.9384);-webkit-text-stroke:0.12px #3d3d45">Βασίλης Αυγερινός</div>
<svg class="a" style="left:989.00px;top:375.40px;" width="9" height="9" viewBox="0 0 9 9"><path d="M3.2 4.5V1.9C3.2 1.1 3.8 0.6 4.5 0.6S5.8 1.1 5.8 1.9V3.5M3.9 5.3C4.1 5.5 4.3 5.6 4.5 5.6C5.2 5.6 5.8 5.1 5.8 4.4" fill="none" stroke="#e6605f" stroke-width="0.75"/><path d="M2 4.4C2 6 3.1 7.1 4.5 7.1S7 6 7 4.4M4.5 7.1V8.5M3.2 8.5H5.8M0.9 8.4L8.1 0.6" fill="none" stroke="#e6605f" stroke-width="0.75"/></svg>
<svg class="a" style="left:1001.00px;top:375.40px;" width="10" height="9" viewBox="0 0 10 9"><path d="M6 2.1H1.6C1 2.1 0.6 2.5 0.6 3.1V6.6C0.6 7.2 1 7.6 1.6 7.6H6.2C6.8 7.6 7.2 7.2 7.2 6.6V4.2" fill="none" stroke="#e6605f" stroke-width="0.75"/><path d="M7.2 4.3L9.5 3V7L7.2 5.6M1.2 8.5L8.8 0.6" fill="none" stroke="#e6605f" stroke-width="0.75"/></svg>
<div class="a" style="left:864.00px;top:394.75px;width:14.00px;height:14.00px;background:#d9621d;border-radius:3.5px"></div>
<div class="a" style="left:864px;top:395.1px;width:14px;height:14px;color:#fff;font-size:7px;font-weight:bold;line-height:14px;text-align:center">Γ</div>
<div class="t" id="t118" style="left:885.00px;top:398.86px;font-size:7.40px;color:#3d3d45;transform:scaleX(0.8874);-webkit-text-stroke:0.12px #3d3d45">ΓΑΖΗΣ ΝΙΚΟΣ</div>
<svg class="a" style="left:989.00px;top:397.25px;" width="9" height="9" viewBox="0 0 9 9"><path d="M3.2 4.5V1.9C3.2 1.1 3.8 0.6 4.5 0.6S5.8 1.1 5.8 1.9V3.5M3.9 5.3C4.1 5.5 4.3 5.6 4.5 5.6C5.2 5.6 5.8 5.1 5.8 4.4" fill="none" stroke="#e6605f" stroke-width="0.75"/><path d="M2 4.4C2 6 3.1 7.1 4.5 7.1S7 6 7 4.4M4.5 7.1V8.5M3.2 8.5H5.8M0.9 8.4L8.1 0.6" fill="none" stroke="#e6605f" stroke-width="0.75"/></svg>
<svg class="a" style="left:1001.00px;top:397.25px;" width="10" height="9" viewBox="0 0 10 9"><path d="M6 2.1H1.6C1 2.1 0.6 2.5 0.6 3.1V6.6C0.6 7.2 1 7.6 1.6 7.6H6.2C6.8 7.6 7.2 7.2 7.2 6.6V4.2" fill="none" stroke="#e6605f" stroke-width="0.75"/><path d="M7.2 4.3L9.5 3V7L7.2 5.6M1.2 8.5L8.8 0.6" fill="none" stroke="#e6605f" stroke-width="0.75"/></svg>
<div class="a" style="left:864.00px;top:416.60px;width:14.00px;height:14.00px;background:#2e3f5c;border-radius:3.5px"></div>
<div class="a" style="left:864px;top:416.9px;width:14px;height:14px;color:#fff;font-size:7px;font-weight:bold;line-height:14px;text-align:center">Δ</div>
<div class="t" id="t119" style="left:885.00px;top:420.70px;font-size:7.40px;color:#3d3d45;transform:scaleX(0.9311);-webkit-text-stroke:0.12px #3d3d45">Δημητρης</div>
<svg class="a" style="left:989.00px;top:419.10px;" width="9" height="9" viewBox="0 0 9 9"><path d="M3.2 4.5V1.9C3.2 1.1 3.8 0.6 4.5 0.6S5.8 1.1 5.8 1.9V3.5M3.9 5.3C4.1 5.5 4.3 5.6 4.5 5.6C5.2 5.6 5.8 5.1 5.8 4.4" fill="none" stroke="#e6605f" stroke-width="0.75"/><path d="M2 4.4C2 6 3.1 7.1 4.5 7.1S7 6 7 4.4M4.5 7.1V8.5M3.2 8.5H5.8M0.9 8.4L8.1 0.6" fill="none" stroke="#e6605f" stroke-width="0.75"/></svg>
<svg class="a" style="left:1001.00px;top:419.10px;" width="10" height="9" viewBox="0 0 10 9"><path d="M6 2.1H1.6C1 2.1 0.6 2.5 0.6 3.1V6.6C0.6 7.2 1 7.6 1.6 7.6H6.2C6.8 7.6 7.2 7.2 7.2 6.6V4.2" fill="none" stroke="#e6605f" stroke-width="0.75"/><path d="M7.2 4.3L9.5 3V7L7.2 5.6M1.2 8.5L8.8 0.6" fill="none" stroke="#e6605f" stroke-width="0.75"/></svg>
<div class="a" style="left:864.00px;top:438.45px;width:14.00px;height:14.00px;background:#f39c1e;border-radius:3.5px"></div>
<div class="a" style="left:864px;top:438.8px;width:14px;height:14px;color:#fff;font-size:7px;font-weight:bold;line-height:14px;text-align:center">Ε</div>
<div class="t" id="t120" style="left:885.00px;top:442.55px;font-size:7.40px;color:#3d3d45;transform:scaleX(0.9298);-webkit-text-stroke:0.12px #3d3d45">Ευθύμιος Μήταλας ΕΒΕ Φωκίδας</div>
<svg class="a" style="left:989.00px;top:440.95px;" width="9" height="9" viewBox="0 0 9 9"><path d="M3.2 4.5V1.9C3.2 1.1 3.8 0.6 4.5 0.6S5.8 1.1 5.8 1.9V3.5M3.9 5.3C4.1 5.5 4.3 5.6 4.5 5.6C5.2 5.6 5.8 5.1 5.8 4.4" fill="none" stroke="#e6605f" stroke-width="0.75"/><path d="M2 4.4C2 6 3.1 7.1 4.5 7.1S7 6 7 4.4M4.5 7.1V8.5M3.2 8.5H5.8M0.9 8.4L8.1 0.6" fill="none" stroke="#e6605f" stroke-width="0.75"/></svg>
<svg class="a" style="left:1001.00px;top:440.95px;" width="10" height="9" viewBox="0 0 10 9"><path d="M6 2.1H1.6C1 2.1 0.6 2.5 0.6 3.1V6.6C0.6 7.2 1 7.6 1.6 7.6H6.2C6.8 7.6 7.2 7.2 7.2 6.6V4.2" fill="none" stroke="#e6605f" stroke-width="0.75"/><path d="M7.2 4.3L9.5 3V7L7.2 5.6M1.2 8.5L8.8 0.6" fill="none" stroke="#e6605f" stroke-width="0.75"/></svg>
<div class="a" style="left:864.00px;top:460.30px;width:14.00px;height:14.00px;background:#c93a32;border-radius:3.5px"></div>
<div class="a" style="left:864px;top:460.6px;width:14px;height:14px;color:#fff;font-size:7px;font-weight:bold;line-height:14px;text-align:center">Ε</div>
<div class="t" id="t121" style="left:885.00px;top:464.41px;font-size:7.40px;color:#3d3d45;transform:scaleX(0.8488);-webkit-text-stroke:0.12px #3d3d45">ΕΦΗ ΓΕΩΡΓΟΥΛΑ</div>
<svg class="a" style="left:989.00px;top:462.80px;" width="9" height="9" viewBox="0 0 9 9"><path d="M3.2 4.5V1.9C3.2 1.1 3.8 0.6 4.5 0.6S5.8 1.1 5.8 1.9V3.5M3.9 5.3C4.1 5.5 4.3 5.6 4.5 5.6C5.2 5.6 5.8 5.1 5.8 4.4" fill="none" stroke="#e6605f" stroke-width="0.75"/><path d="M2 4.4C2 6 3.1 7.1 4.5 7.1S7 6 7 4.4M4.5 7.1V8.5M3.2 8.5H5.8M0.9 8.4L8.1 0.6" fill="none" stroke="#e6605f" stroke-width="0.75"/></svg>
<svg class="a" style="left:1001.00px;top:462.80px;" width="10" height="9" viewBox="0 0 10 9"><path d="M6 2.1H1.6C1 2.1 0.6 2.5 0.6 3.1V6.6C0.6 7.2 1 7.6 1.6 7.6H6.2C6.8 7.6 7.2 7.2 7.2 6.6V4.2" fill="none" stroke="#e6605f" stroke-width="0.75"/><path d="M7.2 4.3L9.5 3V7L7.2 5.6M1.2 8.5L8.8 0.6" fill="none" stroke="#e6605f" stroke-width="0.75"/></svg>
<div class="a" style="left:864.00px;top:482.15px;width:14.00px;height:14.00px;background:#d9621d;border-radius:3.5px"></div>
<div class="a" style="left:864px;top:482.5px;width:14px;height:14px;color:#fff;font-size:7px;font-weight:bold;line-height:14px;text-align:center">Ι</div>
<div class="t" id="t122" style="left:885.00px;top:486.25px;font-size:7.40px;color:#3d3d45;transform:scaleX(0.9531);-webkit-text-stroke:0.12px #3d3d45">Ιωάννης Γκλάβανος</div>
<svg class="a" style="left:989.00px;top:484.65px;" width="9" height="9" viewBox="0 0 9 9"><path d="M3.2 4.5V1.9C3.2 1.1 3.8 0.6 4.5 0.6S5.8 1.1 5.8 1.9V3.5M3.9 5.3C4.1 5.5 4.3 5.6 4.5 5.6C5.2 5.6 5.8 5.1 5.8 4.4" fill="none" stroke="#e6605f" stroke-width="0.75"/><path d="M2 4.4C2 6 3.1 7.1 4.5 7.1S7 6 7 4.4M4.5 7.1V8.5M3.2 8.5H5.8M0.9 8.4L8.1 0.6" fill="none" stroke="#e6605f" stroke-width="0.75"/></svg>
<svg class="a" style="left:1001.00px;top:484.65px;" width="10" height="9" viewBox="0 0 10 9"><path d="M6 2.1H1.6C1 2.1 0.6 2.5 0.6 3.1V6.6C0.6 7.2 1 7.6 1.6 7.6H6.2C6.8 7.6 7.2 7.2 7.2 6.6V4.2" fill="none" stroke="#e6605f" stroke-width="0.75"/><path d="M7.2 4.3L9.5 3V7L7.2 5.6M1.2 8.5L8.8 0.6" fill="none" stroke="#e6605f" stroke-width="0.75"/></svg>
<div class="a" style="left:864.00px;top:504.00px;width:14.00px;height:14.00px;background:#c93a32;border-radius:3.5px"></div>
<div class="a" style="left:864px;top:504.3px;width:14px;height:14px;color:#fff;font-size:7px;font-weight:bold;line-height:14px;text-align:center">Λ</div>
<div class="t" id="t123" style="left:885.00px;top:508.11px;font-size:7.40px;color:#3d3d45;transform:scaleX(0.9636);-webkit-text-stroke:0.12px #3d3d45">Λουκάς Θεοφίλου</div>
<svg class="a" style="left:989.00px;top:506.50px;" width="9" height="9" viewBox="0 0 9 9"><path d="M3.2 4.5V1.9C3.2 1.1 3.8 0.6 4.5 0.6S5.8 1.1 5.8 1.9V3.5M3.9 5.3C4.1 5.5 4.3 5.6 4.5 5.6C5.2 5.6 5.8 5.1 5.8 4.4" fill="none" stroke="#e6605f" stroke-width="0.75"/><path d="M2 4.4C2 6 3.1 7.1 4.5 7.1S7 6 7 4.4M4.5 7.1V8.5M3.2 8.5H5.8M0.9 8.4L8.1 0.6" fill="none" stroke="#e6605f" stroke-width="0.75"/></svg>
<svg class="a" style="left:1001.00px;top:506.50px;" width="10" height="9" viewBox="0 0 10 9"><path d="M6 2.1H1.6C1 2.1 0.6 2.5 0.6 3.1V6.6C0.6 7.2 1 7.6 1.6 7.6H6.2C6.8 7.6 7.2 7.2 7.2 6.6V4.2" fill="none" stroke="#e6605f" stroke-width="0.75"/><path d="M7.2 4.3L9.5 3V7L7.2 5.6M1.2 8.5L8.8 0.6" fill="none" stroke="#e6605f" stroke-width="0.75"/></svg>
<div class="a" style="left:875.50px;top:534.00px;width:28.20px;height:12.50px;background:transparent;border:1px solid #bcbcc4;border-radius:4px"></div>
<div class="t" id="t124" style="left:881.90px;top:538.62px;font-size:6.80px;color:#333;transform:scaleX(0.9538)">Invite</div>
<div class="a" style="left:927.00px;top:534.00px;width:37.50px;height:12.50px;background:transparent;border:1px solid #bcbcc4;border-radius:4px"></div>
<div class="t" id="t125" style="left:933.00px;top:538.62px;font-size:6.80px;color:#333;transform:scaleX(1.0460)">Mute All</div>
<div class="a" style="left:987.70px;top:534.00px;width:12.10px;height:12.50px;background:transparent;border:1px solid #bcbcc4;border-radius:4px"></div>
<div class="a" style="left:990.80px;top:540.00px;width:1.00px;height:1.00px;background:#333"></div>
<div class="a" style="left:993.30px;top:540.00px;width:1.00px;height:1.00px;background:#333"></div>
<div class="a" style="left:995.80px;top:540.00px;width:1.00px;height:1.00px;background:#333"></div>
</body></html>
